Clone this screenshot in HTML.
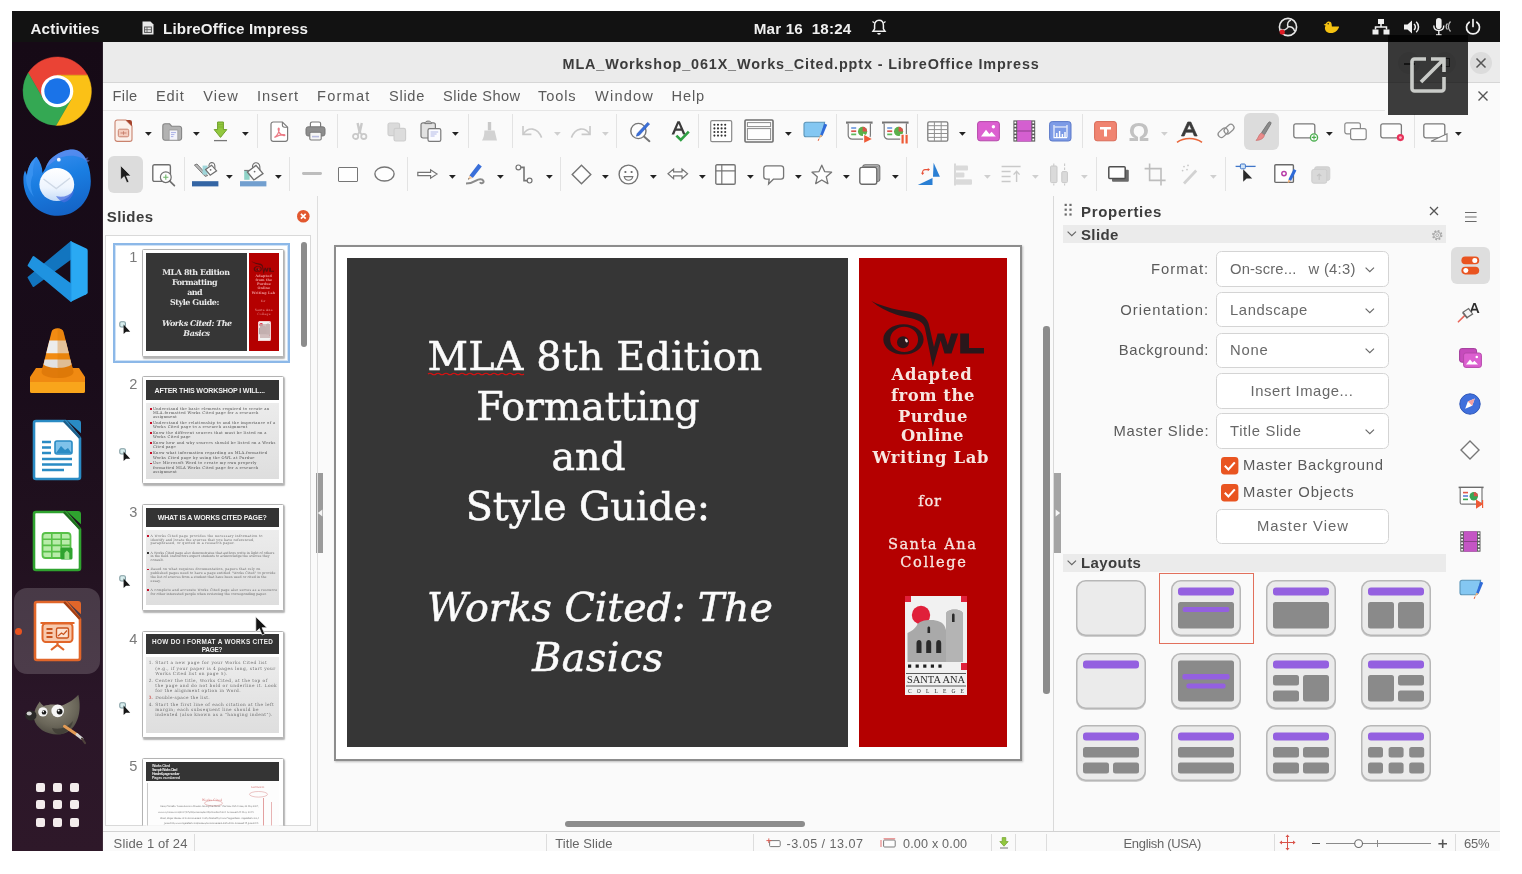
<!DOCTYPE html>
<html lang="en">
<head>
<meta charset="utf-8">
<title>MLA_Workshop_061X_Works_Cited.pptx - LibreOffice Impress</title>
<style>
*{box-sizing:border-box;margin:0;padding:0}
html,body{width:1522px;height:874px;overflow:hidden;background:#fff}
body{position:relative;font-family:"Liberation Sans",sans-serif;font-size:14px;color:#4a4a4a}
#screen{position:absolute;left:12px;top:11px;width:1488px;height:840px;background:#fafafa;overflow:hidden}
#pg{position:absolute;left:-12px;top:-11px;width:1522px;height:874px;will-change:transform}
#pg div,#pg span.t,#pg svg.i{position:absolute}
span.t{white-space:pre}
svg.i{overflow:visible}
</style>
</head>
<body>
<div id="screen"><div id="pg">
<div style="left:12.0px;top:11.0px;width:1488.0px;height:31.0px;background:#121212;"></div>
<span class="t" style="left:30.5px;top:20.5px;font-size:15.2px;line-height:15.2px;color:#f0f0f0;font-weight:700;letter-spacing:0.15px;">Activities</span>
<span class="t" style="left:163.0px;top:20.5px;font-size:15.2px;line-height:15.2px;color:#f0f0f0;font-weight:700;letter-spacing:0.13px;">LibreOffice Impress</span>
<span class="t" style="left:753.8px;top:20.5px;font-size:15.2px;line-height:15.2px;color:#f0f0f0;font-weight:700;letter-spacing:0.17px;">Mar 16  18:24</span>
<svg class="i" style="left:141.0px;top:20.0px;" width="14" height="16" viewBox="0 0 14 16"><path d="M1.5 1.5h8l3 3v10h-11z" fill="#e8e8e8"/><rect x="3.6" y="7" width="6.8" height="5.4" fill="none" stroke="#555" stroke-width="1"/><path d="M3.6 9.7h6.8M6 7v5.4" stroke="#555" stroke-width=".8"/></svg>
<svg class="i" style="left:870.0px;top:18.0px;" width="18" height="19" viewBox="0 0 18 19"><path d="M9 2.2c-2.9 0-4.4 2.2-4.4 5v3.6L3 13.2h12l-1.6-2.4V7.2c0-2.8-1.5-5-4.4-5z" fill="none" stroke="#f0f0f0" stroke-width="1.5"/><path d="M7.2 15h3.6a1.8 1.8 0 0 1-3.6 0z" fill="#f0f0f0"/><path d="M2.5 3.5l2 1.5M15.5 3.5l-2 1.5" stroke="#f0f0f0" stroke-width="1.2"/></svg>
<svg class="i" style="left:1278.0px;top:17.0px;" width="20" height="20" viewBox="0 0 20 20"><circle cx="10" cy="10" r="8.6" fill="#1a1a1a" stroke="#e6e6e6" stroke-width="1.6"/><path d="M10 10c-1-3 0-6 3-7M10 10c3-1 6 1 6.5 4M10 10c-1.5 3-5 4-7.5 2" stroke="#e6e6e6" stroke-width="1.5" fill="none"/><circle cx="4.2" cy="15" r="2.6" fill="#e01b24"/></svg>
<svg class="i" style="left:1323.0px;top:20.0px;" width="18" height="15" viewBox="0 0 18 15"><path d="M3 3.5c1.2-2.6 5-2.6 5.6.4l.3 2.6h6.600000000000001c.4 0 .7.5.4.9-1.3 2.6-3.400000000000001 5.6-8 5.6-3.6 0-6-2-6-5 0-1 .3-1.700000000000001.8-2.200000000000001L.6 4.8z" fill="#f5c211"/><circle cx="5.2" cy="3.8" r=".8" fill="#222"/></svg>
<svg class="i" style="left:1372.0px;top:18.0px;" width="18" height="18" viewBox="0 0 18 18"><rect x="6" y="1" width="6" height="5" fill="#f0f0f0"/><rect x="0.5" y="11.5" width="6" height="5" fill="#f0f0f0"/><rect x="11.5" y="11.5" width="6" height="5" fill="#f0f0f0"/><path d="M9 6v3M3.5 11.5V9h11v2.5" stroke="#f0f0f0" stroke-width="1.5" fill="none"/></svg>
<svg class="i" style="left:1403.0px;top:18.0px;" width="18" height="18" viewBox="0 0 18 18"><path d="M1 6.5h3.5L9 2.5v13L4.500000000000001 11.5H1z" fill="#f0f0f0"/><path d="M11 6a4 4 0 0 1 0 6M13.2 3.8a7 7 0 0 1 0 10.4" stroke="#f0f0f0" stroke-width="1.5" fill="none"/></svg>
<svg class="i" style="left:1432.0px;top:17.0px;" width="21" height="20" viewBox="0 0 21 20"><rect x="4" y="1" width="5.6" height="11" rx="2.8" fill="#f0f0f0"/><path d="M1.8 8.5c0 3 2 5 5 5s5-2 5-5M6.8 13.5v4M4 18h5.6" stroke="#f0f0f0" stroke-width="1.4" fill="none"/><path d="M15.5 6.5a4 4 0 0 0 0 6M18.5 4.5a7 7 0 0 0 0 10" stroke="#bdbdbd" stroke-width="1.3" fill="none"/></svg>
<svg class="i" style="left:1464.0px;top:18.0px;" width="18" height="18" viewBox="0 0 18 18"><path d="M5.2 4.2a6.5 6.5 0 1 0 7.6 0" stroke="#f0f0f0" stroke-width="1.7" fill="none" stroke-linecap="round"/><path d="M9 1.5v7" stroke="#f0f0f0" stroke-width="1.7" stroke-linecap="round"/></svg>
<div style="left:103.0px;top:42.0px;width:1397.0px;height:40.5px;background:#ebebeb;"></div>
<div style="left:103.0px;top:82.0px;width:1397.0px;height:1.0px;background:#d6d6d6;"></div>
<span class="t" style="left:562.6px;top:57.2px;font-size:14.4px;line-height:14.4px;color:#3c3c3c;font-weight:700;letter-spacing:0.86px;">MLA_Workshop_061X_Works_Cited.pptx - LibreOffice Impress</span>
<div style="left:1470.0px;top:51.5px;width:22.0px;height:22.0px;background:#dcdcdc;border-radius:11px;"></div>
<svg class="i" style="left:1475.0px;top:57.0px;" width="12" height="12" viewBox="0 0 12 12"><path d="M1.5 1.5l9 9M10.5 1.5l-9 9" stroke="#555" stroke-width="1.5"/></svg>
<div style="left:1398.0px;top:51.5px;width:22.0px;height:22.0px;background:#dcdcdc;border-radius:11px;"></div>
<div style="left:1403.5px;top:63.0px;width:11.0px;height:1.5px;background:#555;"></div>
<div style="left:1434.0px;top:51.5px;width:22.0px;height:22.0px;background:#dcdcdc;border-radius:11px;"></div>
<div style="left:1440.5px;top:58.0px;width:9.0px;height:9.0px;border:1.4px solid #555;"></div>
<div style="left:103.0px;top:83.0px;width:1397.0px;height:27.0px;background:#fafafa;"></div>
<div style="left:103.0px;top:109.5px;width:1282.0px;height:1.0px;background:#e6e6e6;"></div>
<span class="t" style="left:112.4px;top:89.0px;font-size:14.6px;line-height:14.6px;color:#5a5a5a;letter-spacing:0.42px;">File</span>
<span class="t" style="left:156.0px;top:89.0px;font-size:14.6px;line-height:14.6px;color:#5a5a5a;letter-spacing:0.86px;">Edit</span>
<span class="t" style="left:203.3px;top:89.0px;font-size:14.6px;line-height:14.6px;color:#5a5a5a;letter-spacing:1.03px;">View</span>
<span class="t" style="left:256.9px;top:89.0px;font-size:14.6px;line-height:14.6px;color:#5a5a5a;letter-spacing:0.93px;">Insert</span>
<span class="t" style="left:317.0px;top:89.0px;font-size:14.6px;line-height:14.6px;color:#5a5a5a;letter-spacing:1.24px;">Format</span>
<span class="t" style="left:389.0px;top:89.0px;font-size:14.6px;line-height:14.6px;color:#5a5a5a;letter-spacing:0.71px;">Slide</span>
<span class="t" style="left:443.0px;top:89.0px;font-size:14.6px;line-height:14.6px;color:#5a5a5a;letter-spacing:0.45px;">Slide Show</span>
<span class="t" style="left:538.0px;top:89.0px;font-size:14.6px;line-height:14.6px;color:#5a5a5a;letter-spacing:0.88px;">Tools</span>
<span class="t" style="left:595.0px;top:89.0px;font-size:14.6px;line-height:14.6px;color:#5a5a5a;letter-spacing:1.18px;">Window</span>
<span class="t" style="left:671.5px;top:89.0px;font-size:14.6px;line-height:14.6px;color:#5a5a5a;letter-spacing:0.87px;">Help</span>
<svg class="i" style="left:1477.0px;top:90.0px;" width="12" height="12" viewBox="0 0 12 12"><path d="M1.5 1.5l9 9M10.5 1.5l-9 9" stroke="#555" stroke-width="1.4"/></svg>
<div style="left:257.2px;top:114.0px;width:1.0px;height:34.0px;background:#e3e3e3;"></div>
<div style="left:337.3px;top:114.0px;width:1.0px;height:34.0px;background:#e3e3e3;"></div>
<div style="left:467.5px;top:114.0px;width:1.0px;height:34.0px;background:#e3e3e3;"></div>
<div style="left:511.8px;top:114.0px;width:1.0px;height:34.0px;background:#e3e3e3;"></div>
<div style="left:616.2px;top:114.0px;width:1.0px;height:34.0px;background:#e3e3e3;"></div>
<div style="left:698.2px;top:114.0px;width:1.0px;height:34.0px;background:#e3e3e3;"></div>
<div style="left:836.1px;top:114.0px;width:1.0px;height:34.0px;background:#e3e3e3;"></div>
<div style="left:917.3px;top:114.0px;width:1.0px;height:34.0px;background:#e3e3e3;"></div>
<div style="left:1081.8px;top:114.0px;width:1.0px;height:34.0px;background:#e3e3e3;"></div>
<div style="left:1413.8px;top:114.0px;width:1.0px;height:34.0px;background:#e3e3e3;"></div>
<svg class="i" style="left:114.2px;top:119.3px;" width="19" height="23.4" viewBox="0 0 19 23.4"><path d="M1 3.2A2.2 2.2 0 0 1 3.2 1H12l6 6v13.2a2.2 2.2 0 0 1-2.2 2.2H3.2A2.2 2.2 0 0 1 1 20.2z" fill="#fbf1ec" stroke="#c9826d" stroke-width="1.1"/><path d="M12 1h3.8A2.2 2.2 0 0 1 18 3.2V7z" fill="#a5432c"/><rect x="4.3" y="10.2" width="10.4" height="7.6" rx="1.4" fill="#f3cbbd" stroke="#c9826d" stroke-width="1"/><path d="M6.5 14h6M9.5 12.3v3.4" stroke="#c9826d" stroke-width="1"/></svg>
<svg class="i" style="left:145.2px;top:131.5px;" width="6.8" height="3.8" viewBox="0 0 6.8 3.8"><path d="M0 0h6.8L3.4 3.8z" fill="#222"/></svg>
<svg class="i" style="left:161.8px;top:123.2px;" width="20.4" height="18" viewBox="0 0 20.4 18"><path d="M.8 3A2.2 2.2 0 0 1 3 .8h4.6l2 2.4H17.4A2.2 2.2 0 0 1 19.6 5.4V15a2.2 2.2 0 0 1-2.2 2.2H3A2.2 2.2 0 0 1 .8 15z" fill="#b2b2b2" stroke="#858585" stroke-width="1.1"/><path d="M7.2 7h8.6v10.2H7.2z" fill="#f4f4fb" stroke="#9a9a9a" stroke-width=".8"/><path d="M9 9.6h5M9 11.6h3.4M9 13.6h2.4" stroke="#a9b0e6" stroke-width="1"/></svg>
<svg class="i" style="left:193.3px;top:131.5px;" width="6.8" height="3.8" viewBox="0 0 6.8 3.8"><path d="M0 0h6.8L3.4 3.8z" fill="#222"/></svg>
<svg class="i" style="left:212.8px;top:121.0px;" width="15" height="21" viewBox="0 0 15 21"><path d="M4.6 1h5.8v7.6h3.4L7.5 16.4 1.2 8.6h3.4z" fill="#92c83e" stroke="#6f9f2a" stroke-width="1"/><path d="M4.8 3.6h5.4M4.8 6h5.4" stroke="#7fb533" stroke-width="1"/><path d="M1 19.6h13" stroke="#777" stroke-width="1.3"/></svg>
<svg class="i" style="left:241.6px;top:131.5px;" width="6.8" height="3.8" viewBox="0 0 6.8 3.8"><path d="M0 0h6.8L3.4 3.8z" fill="#222"/></svg>
<svg class="i" style="left:270.2px;top:120.5px;" width="18.6" height="21.4" viewBox="0 0 18.6 21.4"><path d="M1 3.2A2.2 2.2 0 0 1 3.2 1h9.2l5.2 5.2v12a2.2 2.2 0 0 1-2.2 2.2H3.2A2.2 2.2 0 0 1 1 18.200000000000003z" fill="#fff" stroke="#7a7a7a" stroke-width="1.2"/><path d="M12.4 1v3a2.2 2.2 0 0 0 2.2 2.2h3" fill="none" stroke="#7a7a7a" stroke-width="1.1"/><path d="M4.4 16.4c2.6-1.600000000000001 4.4-4.4 4.8-8 .2-1.6-1.2-1.6-1 0 .4 3.2 2.6 5.6 5.8 6.2 1.2.2 1.2-1 0-1-3.2 0-6.6 1-9.6 2.8z" fill="none" stroke="#ec7b86" stroke-width="1.2"/></svg>
<svg class="i" style="left:304.8px;top:121.2px;" width="21" height="20" viewBox="0 0 21 20"><path d="M5.4 6V2.6A1.6 1.6 0 0 1 7 1h7a1.6 1.6 0 0 1 1.6 1.6V6" fill="#fff" stroke="#7a7a7a" stroke-width="1.2"/><rect x="1" y="5.8" width="19" height="9.2" rx="2.2" fill="#8d8d8d" stroke="#777" stroke-width="1"/><rect x="4.8" y="11.2" width="11.4" height="7.8" rx="1.2" fill="#f6f6f6" stroke="#7a7a7a" stroke-width="1.1"/><path d="M7 15.6h7" stroke="#b9bde0" stroke-width="1.6"/></svg>
<svg class="i" style="left:352.3px;top:122.4px;" width="15.4" height="18.4" viewBox="0 0 15.4 18.4"><path d="M5.6 1l2.1 9.6M9.8 1L7.7 10.600000000000001" stroke="#c9c9c9" stroke-width="2.4" fill="none"/><circle cx="3.6" cy="14.4" r="2.6" fill="none" stroke="#c9c9c9" stroke-width="1.8"/><circle cx="11.8" cy="14.4" r="2.6" fill="none" stroke="#c9c9c9" stroke-width="1.8"/><path d="M5.600000000000001 12.8l2.1-3 2.1 3" stroke="#c9c9c9" stroke-width="1.8" fill="none"/></svg>
<svg class="i" style="left:386.5px;top:121.6px;" width="19.6" height="20" viewBox="0 0 19.6 20"><rect x="1" y="1" width="11.6" height="12.6" rx="1.8" fill="#dadada" stroke="#cdcdcd" stroke-width="1.1"/><rect x="7" y="6.4" width="11.6" height="12.6" rx="1.8" fill="#dcdcdc" stroke="#cdcdcd" stroke-width="1.1"/></svg>
<svg class="i" style="left:420.1px;top:120.2px;" width="21.8" height="22.4" viewBox="0 0 21.8 22.4"><path d="M1 4.8A2 2 0 0 1 3 2.8h10.4a2 2 0 0 1 2 2V16a2 2 0 0 1-2 2H3a2 2 0 0 1-2-2z" fill="#e2e2e2" stroke="#7a7a7a" stroke-width="1.2"/><path d="M4.8 3.6c0-3.4 6.8-3.4 6.8 0z" fill="#bdbdbd" stroke="#7a7a7a" stroke-width="1"/><rect x="8" y="8.6" width="12.8" height="12.8" rx="1.6" fill="#fbfbff" stroke="#7a7a7a" stroke-width="1.2"/><path d="M10.6 12h7.6M10.6 14h6M10.6 16h4" stroke="#b4b9e8" stroke-width="1.2"/></svg>
<svg class="i" style="left:451.9px;top:131.5px;" width="6.8" height="3.8" viewBox="0 0 6.8 3.8"><path d="M0 0h6.8L3.4 3.8z" fill="#222"/></svg>
<svg class="i" style="left:480.5px;top:121.0px;" width="17" height="20.4" viewBox="0 0 17 20.4"><path d="M6.8 1h3.4v8.4H6.8z" fill="#c9c9c9"/><path d="M3.4 9.4h10.2l2.4 10H1c1.6-2.400000000000001 2.4-5.6 2.4-10z" fill="#d2d2d2"/></svg>
<svg class="i" style="left:521.0px;top:123.5px;" width="22" height="15" viewBox="0 0 22 15"><path d="M2 2v8.4h8.4" fill="none" stroke="#c9c9c9" stroke-width="1.6"/><path d="M2.4 10C7 2.8 16.4 3 20.6 13.6" fill="none" stroke="#c9c9c9" stroke-width="1.6"/></svg>
<svg class="i" style="left:553.6px;top:131.5px;" width="6.8" height="3.8" viewBox="0 0 6.8 3.8"><path d="M0 0h6.8L3.4 3.8z" fill="#cfcfcf"/></svg>
<svg class="i" style="left:570.0px;top:123.5px;" width="22" height="15" viewBox="0 0 22 15"><path d="M20 2v8.4h-8.4" fill="none" stroke="#c9c9c9" stroke-width="1.6"/><path d="M19.6 10C15 2.8 5.6 3 1.4 13.6" fill="none" stroke="#c9c9c9" stroke-width="1.6"/></svg>
<svg class="i" style="left:602.2px;top:131.5px;" width="6.8" height="3.8" viewBox="0 0 6.8 3.8"><path d="M0 0h6.8L3.4 3.8z" fill="#cfcfcf"/></svg>
<svg class="i" style="left:629.0px;top:120.2px;" width="22" height="22" viewBox="0 0 22 22"><circle cx="9.4" cy="11" r="7.6" fill="#fdfdfd" stroke="#767676" stroke-width="1.4"/><path d="M15 16.6l5.4 4.6" stroke="#767676" stroke-width="2" stroke-linecap="round"/><path d="M8.2 13.6L18.6 2.4l2 1.6L10.4 15.200000000000001l-3 1z" fill="#3a6fd9" stroke="#2b59b8" stroke-width=".6"/></svg>
<svg class="i" style="left:668.5px;top:120.0px;" width="21" height="22" viewBox="0 0 21 22"><path d="M2.6 14.4L8.4 1.2h2.400000000000001L16.6 14.4h-2.6l-1.5-3.6H6.7l-1.5 3.6zM7.6 8.6h4L9.6 3.8z" fill="#3a3a3a"/><path d="M7.4 15.6l4.4 4.4 8-8.4" fill="none" stroke="#2fa043" stroke-width="2.6"/></svg>
<svg class="i" style="left:709.8px;top:119.8px;" width="22.4" height="22.4" viewBox="0 0 22.4 22.4"><rect x=".7" y=".7" width="21" height="21" rx="1.4" fill="#fff" stroke="#8a8a8a" stroke-width="1.2"/><circle cx="4.4" cy="4.8" r="1.05" fill="#333"/><circle cx="4.4" cy="8.4" r="1.05" fill="#333"/><circle cx="4.4" cy="12.0" r="1.05" fill="#333"/><circle cx="4.4" cy="15.6" r="1.05" fill="#333"/><circle cx="8.0" cy="4.8" r="1.05" fill="#333"/><circle cx="8.0" cy="8.4" r="1.05" fill="#333"/><circle cx="8.0" cy="12.0" r="1.05" fill="#333"/><circle cx="8.0" cy="15.6" r="1.05" fill="#333"/><circle cx="11.6" cy="4.8" r="1.05" fill="#333"/><circle cx="11.6" cy="8.4" r="1.05" fill="#333"/><circle cx="11.6" cy="12.0" r="1.05" fill="#333"/><circle cx="11.6" cy="15.6" r="1.05" fill="#333"/><circle cx="15.2" cy="4.8" r="1.05" fill="#333"/><circle cx="15.2" cy="8.4" r="1.05" fill="#333"/><circle cx="15.2" cy="12.0" r="1.05" fill="#333"/><circle cx="15.2" cy="15.6" r="1.05" fill="#333"/></svg>
<svg class="i" style="left:744.0px;top:119.0px;" width="30" height="24" viewBox="0 0 30 24"><rect x="1" y="1" width="28" height="22" rx="1" fill="#fdfdfd" stroke="#6f6f6f" stroke-width="1.6"/><rect x="3.4" y="3.6" width="23.2" height="4" fill="none" stroke="#8a8a8a" stroke-width="1"/><rect x="3.4" y="9.6" width="23.2" height="11" fill="none" stroke="#8a8a8a" stroke-width="1"/></svg>
<svg class="i" style="left:784.9px;top:131.5px;" width="6.8" height="3.8" viewBox="0 0 6.8 3.8"><path d="M0 0h6.8L3.4 3.8z" fill="#222"/></svg>
<svg class="i" style="left:802.5px;top:121.0px;" width="25" height="21" viewBox="0 0 25 21"><path d="M1 3.2A2 2 0 0 1 3 1.2h18.6L19 14.2a2 2 0 0 1-2 1.6H3a2 2 0 0 1-2-2z" fill="#84c7f2" stroke="#5a94b8" stroke-width="1.1"/><path d="M17.2 13.8L21.4 2.6l2.8 1.2-4.6 11z" fill="#2f6bd8"/><path d="M17.2 13.8l-1.2 3.8 3.600000000000001-2.8z" fill="#f0b27a"/><path d="M16 17.6l-.8 2.2" stroke="#e4572e" stroke-width="1"/></svg>
<svg class="i" style="left:845.7px;top:120.5px;" width="26.6" height="23" viewBox="0 0 26.6 23"><path d="M0 1.6h26.6" stroke="#757575" stroke-width="2.2"/><path d="M2.2 2.4v11.800000000000001a4 4 0 0 0 4 4h14.2a4 4 0 0 0 4-4V2.4" fill="#fdfdfd" stroke="#7a7a7a" stroke-width="1.2"/><path d="M5.2 7h5" stroke="#6f9be0" stroke-width="1.7"/><path d="M5.2 10.2h5" stroke="#d9534a" stroke-width="1.7"/><path d="M5.2 13.4h5" stroke="#5cb85c" stroke-width="1.7"/><circle cx="16.6" cy="10.4" r="4.6" fill="#5ab04a"/><path d="M16.6 10.4V5.800000000000001a4.6 4.6 0 0 1 4.6 4.6z" fill="#d9534a"/><path d="M17 12.600000000000001l9.6 5-9.6 5z" fill="#fafafa"/><path d="M18.2 14l7.6 3.9-7.6 3.9z" fill="#ee5a36"/></svg>
<svg class="i" style="left:881.7px;top:120.5px;" width="26.6" height="23" viewBox="0 0 26.6 23"><path d="M0 1.6h26.6" stroke="#757575" stroke-width="2.2"/><path d="M2.2 2.4v11.800000000000001a4 4 0 0 0 4 4h14.2a4 4 0 0 0 4-4V2.4" fill="#fdfdfd" stroke="#7a7a7a" stroke-width="1.2"/><path d="M5.2 7h5" stroke="#6f9be0" stroke-width="1.7"/><path d="M5.2 10.2h5" stroke="#d9534a" stroke-width="1.7"/><path d="M5.2 13.4h5" stroke="#5cb85c" stroke-width="1.7"/><circle cx="16.6" cy="10.4" r="4.6" fill="#5ab04a"/><path d="M16.6 10.4V5.800000000000001a4.6 4.6 0 0 1 4.6 4.6z" fill="#d9534a"/><rect x="18.2" y="13" width="8.4" height="10" fill="#fafafa"/><path d="M20.6 13.8v8.6M24.6 13.8v8.6" stroke="#ee5a36" stroke-width="2.2"/></svg>
<svg class="i" style="left:927.2px;top:120.5px;" width="21.6" height="21" viewBox="0 0 21.6 21"><rect x=".8" y=".8" width="20" height="19.4" rx="1.4" fill="#fdfdfd" stroke="#7d7d7d" stroke-width="1.3"/><path d="M.8 4.7h20M.8 8.6h20M.8 12.5h20M.8 16.4h20M7.4.8v19.4M14.2.8v19.4" stroke="#8f8f8f" stroke-width="1"/></svg>
<svg class="i" style="left:959.3px;top:131.5px;" width="6.8" height="3.8" viewBox="0 0 6.8 3.8"><path d="M0 0h6.8L3.4 3.8z" fill="#222"/></svg>
<svg class="i" style="left:976.8px;top:121.2px;" width="23" height="20.4" viewBox="0 0 23 20.4"><rect x=".6" y=".6" width="21.8" height="19.2" rx="2.4" fill="#dc5fd0" stroke="#b548aa" stroke-width="1"/><path d="M4 15.4l5-6.6 3.4 4.2 2.2-2.2 4.200000000000001 4.6z" fill="#fff"/><circle cx="16.4" cy="5.8" r="1.7" fill="#fff"/></svg>
<svg class="i" style="left:1013.0px;top:120.2px;" width="22.6" height="22" viewBox="0 0 22.6 22"><rect x=".4" y=".4" width="21.8" height="21.2" fill="#5b5b5b"/><rect x="4.2" y=".4" width="14.2" height="21.2" fill="#d45fd0"/><path d="M4.2 11h14.2" stroke="#8c3e8a" stroke-width="1"/><rect x="1.4" y="1.6" width="1.8" height="1.8" fill="#fff"/><rect x="19.4" y="1.6" width="1.8" height="1.8" fill="#fff"/><rect x="1.4" y="5.0" width="1.8" height="1.8" fill="#fff"/><rect x="19.4" y="5.0" width="1.8" height="1.8" fill="#fff"/><rect x="1.4" y="8.4" width="1.8" height="1.8" fill="#fff"/><rect x="19.4" y="8.4" width="1.8" height="1.8" fill="#fff"/><rect x="1.4" y="11.8" width="1.8" height="1.8" fill="#fff"/><rect x="19.4" y="11.8" width="1.8" height="1.8" fill="#fff"/><rect x="1.4" y="15.2" width="1.8" height="1.8" fill="#fff"/><rect x="19.4" y="15.2" width="1.8" height="1.8" fill="#fff"/><rect x="1.4" y="18.6" width="1.8" height="1.8" fill="#fff"/><rect x="19.4" y="18.6" width="1.8" height="1.8" fill="#fff"/></svg>
<svg class="i" style="left:1049.3px;top:121.1px;" width="22.6" height="20.6" viewBox="0 0 22.6 20.6"><rect x=".6" y=".6" width="21.4" height="19.4" rx="2.6" fill="#7d9be6" stroke="#5a78c8" stroke-width="1"/><path d="M5 4v12.6h13M18 4v12.6" stroke="#fff" stroke-width="1.1" fill="none"/><path d="M5.6 6h12" stroke="#fff" stroke-width="1"/><path d="M7.8 16v-4M10.6 16v-6M13.4 16v-3M16 16v-5" stroke="#fff" stroke-width="1.4"/></svg>
<svg class="i" style="left:1094.0px;top:121.2px;" width="23" height="20.4" viewBox="0 0 23 20.4"><rect x=".6" y=".6" width="21.8" height="19.2" rx="2.4" fill="#f08471" stroke="#d96a57" stroke-width="1"/><path d="M6 6h11v2.6H13v7h-3v-7H6z" fill="#fff"/></svg>
<span class="t" style="left:1128.4px;top:118.6px;font-size:26px;line-height:26px;color:#c2c2c2;font-weight:700;letter-spacing:0.75px;">Ω</span>
<svg class="i" style="left:1160.9px;top:131.5px;" width="6.8" height="3.8" viewBox="0 0 6.8 3.8"><path d="M0 0h6.8L3.4 3.8z" fill="#cfcfcf"/></svg>
<svg class="i" style="left:1176.0px;top:120.5px;" width="27" height="23" viewBox="0 0 27 23"><path d="M5.4 15L11.8 1h3L21.2 15h-2.8l-1.6-3.8h-7l-1.6 3.8zM10.8 8.8h5L13.3 3.4z" fill="#3a3a3a" stroke="#3a3a3a" stroke-width=".7"/><path d="M1 21.4c7-5.2 18-5.2 25 0" fill="none" stroke="#e8663a" stroke-width="1.6"/></svg>
<svg class="i" style="left:1216.3px;top:121.4px;" width="20" height="20" viewBox="0 0 20 20"><rect x="1.6" y="8.6" width="11" height="6.4" rx="3.2" transform="rotate(-42 7 11.8)" fill="none" stroke="#8f8f8f" stroke-width="1.25"/><rect x="7.6" y="5" width="11" height="6.4" rx="3.2" transform="rotate(-42 13 8.2)" fill="none" stroke="#8f8f8f" stroke-width="1.25"/></svg>
<div style="left:1244.0px;top:113.0px;width:35.4px;height:37.4px;background:#dcdcdc;border-radius:6px;"></div>
<svg class="i" style="left:1252.5px;top:121.1px;" width="19" height="21" viewBox="0 0 19 21"><path d="M8.6 11.6L15.4 1.6c1.4-1.6 3.2-.4 2.4 1.4L11.6 13.600000000000001z" fill="#8a8a8a" stroke="#6c6c6c" stroke-width=".8"/><path d="M8 12l3.4 2.2c-.6 3-3.4 5-8.4 5.200000000000001 2-1.600000000000001 2.4-5.2 5-7.4z" fill="#e98a8a" stroke="#c96a6a" stroke-width=".7"/></svg>
<svg class="i" style="left:1293.0px;top:122.5px;" width="26" height="19" viewBox="0 0 26 19"><rect x=".8" y=".8" width="21" height="14" rx="2" fill="#fdfdfd" stroke="#7a7a7a" stroke-width="1.3"/><circle cx="21" cy="14.4" r="3.6" fill="#fdfdfd" stroke="#4caf50" stroke-width="1.3"/><path d="M21 12.2v4.4M18.8 14.4h4.4" stroke="#4caf50" stroke-width="1.2"/></svg>
<svg class="i" style="left:1326.4px;top:131.5px;" width="6.8" height="3.8" viewBox="0 0 6.8 3.8"><path d="M0 0h6.8L3.4 3.8z" fill="#222"/></svg>
<svg class="i" style="left:1343.5px;top:121.8px;" width="23" height="18.4" viewBox="0 0 23 18.4"><rect x=".8" y=".8" width="15.6" height="11" rx="2" fill="#fdfdfd" stroke="#8a8a8a" stroke-width="1.2"/><rect x="6.6" y="6.6" width="15.6" height="11" rx="2" fill="#fdfdfd" stroke="#8a8a8a" stroke-width="1.2"/></svg>
<svg class="i" style="left:1379.8px;top:122.5px;" width="24.4" height="19" viewBox="0 0 24.4 19"><rect x=".8" y=".8" width="20.6" height="14" rx="2" fill="#fdfdfd" stroke="#7a7a7a" stroke-width="1.3"/><circle cx="20.4" cy="14.6" r="3.6" fill="#e8325a"/><circle cx="20.4" cy="14.6" r="1.4" fill="#f7b3c2"/></svg>
<svg class="i" style="left:1422.5px;top:122.5px;" width="25" height="19" viewBox="0 0 25 19"><rect x=".8" y=".8" width="21" height="14" rx="2" fill="#fdfdfd" stroke="#7a7a7a" stroke-width="1.3"/><path d="M8 18.200000000000003L24 10.8v7.4z" fill="#fdfdfd" stroke="#7a7a7a" stroke-width="1.1"/></svg>
<svg class="i" style="left:1455.3px;top:131.5px;" width="6.8" height="3.8" viewBox="0 0 6.8 3.8"><path d="M0 0h6.8L3.4 3.8z" fill="#222"/></svg>
<div style="left:184.1px;top:157.0px;width:1.0px;height:34.0px;background:#e3e3e3;"></div>
<div style="left:289.3px;top:157.0px;width:1.0px;height:34.0px;background:#e3e3e3;"></div>
<div style="left:407.0px;top:157.0px;width:1.0px;height:34.0px;background:#e3e3e3;"></div>
<div style="left:559.5px;top:157.0px;width:1.0px;height:34.0px;background:#e3e3e3;"></div>
<div style="left:906.2px;top:157.0px;width:1.0px;height:34.0px;background:#e3e3e3;"></div>
<div style="left:1095.5px;top:157.0px;width:1.0px;height:34.0px;background:#e3e3e3;"></div>
<div style="left:1225.3px;top:157.0px;width:1.0px;height:34.0px;background:#e3e3e3;"></div>
<div style="left:107.9px;top:155.7px;width:35.5px;height:37.3px;background:#dcdcdc;border-radius:6px;"></div>
<svg class="i" style="left:120.2px;top:165.3px;" width="11.6" height="18.6" viewBox="0 0 11.6 18.6"><path d="M.6.6v14.2l3.6-3.2 2.6 6.2 2.2-.9-2.6-6h4.6z" fill="#1e1e1e" stroke="#f4f4f4" stroke-width=".6"/></svg>
<svg class="i" style="left:151.7px;top:163.9px;" width="23.4" height="22.6" viewBox="0 0 23.4 22.6"><rect x=".8" y=".8" width="17.6" height="16.6" rx="1.6" fill="#fdfdfd" stroke="#6f6f6f" stroke-width="1.4"/><circle cx="13.8" cy="13.2" r="5.4" fill="#fdfdfd" stroke="#6f6f6f" stroke-width="1.2"/><path d="M13.8 10.6v5.2M11.2 13.200000000000001h5.2" stroke="#6fb56a" stroke-width="1.1"/><path d="M17.8 17.2l4.6 4.4" stroke="#6f6f6f" stroke-width="1.7" stroke-linecap="round"/></svg>
<svg class="i" style="left:192.0px;top:161.0px;" width="26.4" height="25.4" viewBox="0 0 26.4 25.4"><path d="M2.4 4l10.8 11.4 2.4-.8L5 3z" fill="#b9b9b9" stroke="#6f6f6f" stroke-width=".9"/><path d="M10.6 4.6h5v9h-5z" fill="#9fd6da"/><path d="M13.6 8.6l6-4.400000000000001 5 5.6-6.4 4.4z" fill="#fdfdfd" stroke="#6f6f6f" stroke-width="1.2"/><path d="M17 5.4c-.8-4.400000000000001 5.4-5.4 5.8-.8l.2 3.200000000000001" fill="none" stroke="#6f6f6f" stroke-width="1.1"/><circle cx="18.6" cy="8.8" r=".9" fill="#6f6f6f"/><rect x="0" y="20.2" width="26.4" height="5.2" fill="#3465a4"/></svg>
<svg class="i" style="left:226.2px;top:174.6px;" width="6.8" height="3.8" viewBox="0 0 6.8 3.8"><path d="M0 0h6.8L3.4 3.8z" fill="#222"/></svg>
<svg class="i" style="left:239.8px;top:161.0px;" width="26.4" height="25.4" viewBox="0 0 26.4 25.4"><path d="M4.2 9.4h5.4v9.400000000000001H4.2z" fill="#8fd3c7"/><path d="M4.2 9.4h5.4" stroke="#6f6f6f" stroke-width="1"/><path d="M7.4 11l8.6-6.6L23 12.6 13.8 19z" fill="#fdfdfd" stroke="#6f6f6f" stroke-width="1.3"/><path d="M12.6 6.6C11.6 1 19.2-.2 19.8 5.4l.2 4" fill="none" stroke="#6f6f6f" stroke-width="1.1"/><circle cx="14.6" cy="10.600000000000001" r=".9" fill="#6f6f6f"/><rect x="0" y="20.2" width="26.4" height="5.2" fill="#729fcf"/></svg>
<svg class="i" style="left:274.6px;top:174.6px;" width="6.8" height="3.8" viewBox="0 0 6.8 3.8"><path d="M0 0h6.8L3.4 3.8z" fill="#222"/></svg>
<div style="left:302.4px;top:172.0px;width:19.6px;height:2.8px;background:#bdbdbd;border-radius:1.4px;"></div>
<div style="left:337.8px;top:166.7px;width:20.5px;height:15.3px;background:#fefefe;border:1.4px solid #757575;border-radius:1px;"></div>
<svg class="i" style="left:373.7px;top:166.4px;" width="21" height="16" viewBox="0 0 21 16"><ellipse cx="10.5" cy="8" rx="9.6" ry="7" fill="#fefefe" stroke="#757575" stroke-width="1.4"/></svg>
<svg class="i" style="left:416.7px;top:168.6px;" width="21" height="10" viewBox="0 0 21 10"><path d="M.8 3.4h12.8V.8L20 5l-6.4 4.2V6.6H.8z" fill="#fefefe" stroke="#757575" stroke-width="1.2"/></svg>
<svg class="i" style="left:448.8px;top:174.6px;" width="6.8" height="3.8" viewBox="0 0 6.8 3.8"><path d="M0 0h6.8L3.4 3.8z" fill="#222"/></svg>
<svg class="i" style="left:465.3px;top:163.2px;" width="21" height="22" viewBox="0 0 21 22"><path d="M4.4 12.4L13.4.8l3.4 2.6-9 11.6z" fill="#3a6fd9"/><path d="M4.4 12.4l-1.4 4.4 4.800000000000001-1.8z" fill="#f3c9a0"/><path d="M3 16.8l.6-1.8 1 .8z" fill="#555"/><path d="M1 20.6c4.4 0 7-1.2 10-3 2.6-1.6 6.4-2 7.4.2 1 2.2-2.6 3.4-3.4 1.400000000000001" fill="none" stroke="#8a8a8a" stroke-width="2"/></svg>
<svg class="i" style="left:497.1px;top:174.6px;" width="6.8" height="3.8" viewBox="0 0 6.8 3.8"><path d="M0 0h6.8L3.4 3.8z" fill="#222"/></svg>
<svg class="i" style="left:515.4px;top:164.2px;" width="18" height="20" viewBox="0 0 18 20"><circle cx="3.4" cy="3.4" r="2.4" fill="#fefefe" stroke="#757575" stroke-width="1.2"/><circle cx="14.6" cy="16.6" r="2.4" fill="#fefefe" stroke="#757575" stroke-width="1.2"/><path d="M5.8 3.4h3.2v13.2h3.2" fill="none" stroke="#757575" stroke-width="1.6"/></svg>
<svg class="i" style="left:545.5px;top:174.6px;" width="6.8" height="3.8" viewBox="0 0 6.8 3.8"><path d="M0 0h6.8L3.4 3.8z" fill="#222"/></svg>
<svg class="i" style="left:570.5px;top:163.7px;" width="21" height="21" viewBox="0 0 21 21"><path d="M10.5 1.2L19.8 10.5 10.5 19.8 1.2 10.5z" fill="#fefefe" stroke="#757575" stroke-width="1.4"/></svg>
<svg class="i" style="left:602.2px;top:174.6px;" width="6.8" height="3.8" viewBox="0 0 6.8 3.8"><path d="M0 0h6.8L3.4 3.8z" fill="#222"/></svg>
<svg class="i" style="left:618.3px;top:163.7px;" width="21" height="21" viewBox="0 0 21 21"><circle cx="10.5" cy="10.5" r="9.4" fill="#fefefe" stroke="#757575" stroke-width="1.4"/><circle cx="7.4" cy="8" r="1.1" fill="#666"/><circle cx="13.6" cy="8" r="1.1" fill="#666"/><path d="M6.2 12.6h8.6c-.6 2.6-2.4 3.6-4.3 3.6s-3.7-1-4.3-3.6z" fill="#fefefe" stroke="#757575" stroke-width="1.1"/></svg>
<svg class="i" style="left:650.1px;top:174.6px;" width="6.8" height="3.8" viewBox="0 0 6.8 3.8"><path d="M0 0h6.8L3.4 3.8z" fill="#222"/></svg>
<svg class="i" style="left:666.5px;top:168.2px;" width="21.6" height="11.6" viewBox="0 0 21.6 11.6"><path d="M1 5.8L6.6 1v2.8h8.4V1l5.6 4.8-5.6 4.8V7.8H6.6v2.8z" fill="#fefefe" stroke="#757575" stroke-width="1.2"/></svg>
<svg class="i" style="left:698.6px;top:174.6px;" width="6.8" height="3.8" viewBox="0 0 6.8 3.8"><path d="M0 0h6.8L3.4 3.8z" fill="#222"/></svg>
<svg class="i" style="left:714.5px;top:163.7px;" width="21" height="21" viewBox="0 0 21 21"><rect x=".8" y=".8" width="19.4" height="19.4" rx="1.2" fill="#fefefe" stroke="#757575" stroke-width="1.4"/><path d="M.8 6.8h19.4M6.8.8v19.4" stroke="#757575" stroke-width="1.2"/></svg>
<svg class="i" style="left:746.6px;top:174.6px;" width="6.8" height="3.8" viewBox="0 0 6.8 3.8"><path d="M0 0h6.8L3.4 3.8z" fill="#222"/></svg>
<svg class="i" style="left:762.9px;top:164.8px;" width="21.4" height="20" viewBox="0 0 21.4 20"><path d="M3.4.8h14.6a2.600000000000001 2.6 0 0 1 2.6 2.6v8.2a2.6 2.6 0 0 1-2.6 2.6H10.4L5.6 19l.6-4.800000000000001H3.4A2.6 2.6 0 0 1 .8 11.6V3.4A2.6 2.6 0 0 1 3.4.8z" fill="#fefefe" stroke="#757575" stroke-width="1.3"/></svg>
<svg class="i" style="left:795.1px;top:174.6px;" width="6.8" height="3.8" viewBox="0 0 6.8 3.8"><path d="M0 0h6.8L3.4 3.8z" fill="#222"/></svg>
<svg class="i" style="left:811.0px;top:163.5px;" width="21.6" height="20.6" viewBox="0 0 21.6 20.6"><path d="M10.8 1.2l2.8 6.4 7 .6-5.300000000000001 4.6 1.6 6.800000000000001-6.100000000000001-3.600000000000001-6.1 3.6 1.6-6.8L1 8.2l7-.6z" fill="#fefefe" stroke="#757575" stroke-width="1.3" stroke-linejoin="round"/></svg>
<svg class="i" style="left:843.2px;top:174.6px;" width="6.8" height="3.8" viewBox="0 0 6.8 3.8"><path d="M0 0h6.8L3.4 3.8z" fill="#222"/></svg>
<svg class="i" style="left:859.2px;top:163.7px;" width="21.6" height="21" viewBox="0 0 21.6 21"><rect x="3.8" y=".8" width="17" height="16.6" rx="2.4" fill="#c9c9c9" stroke="#6f6f6f" stroke-width="1.1"/><path d="M5 2.4h14.6M19.2 3v13" stroke="#8a8a8a" stroke-width=".9"/><rect x=".8" y="3.4" width="17" height="16.8" rx="2.2" fill="#fefefe" stroke="#6a6a6a" stroke-width="1.4"/></svg>
<svg class="i" style="left:891.6px;top:174.6px;" width="6.8" height="3.8" viewBox="0 0 6.8 3.8"><path d="M0 0h6.8L3.4 3.8z" fill="#222"/></svg>
<svg class="i" style="left:916.5px;top:161.7px;" width="24" height="23" viewBox="0 0 24 23"><path d="M16.6.8l6.3 13.9H16z" fill="#2a7fd4"/><path d="M.8 22.9h14.7V16z" fill="#2a7fd4"/><path d="M5.6 11.6V10a2.4 2.4 0 0 1 2.4-2.4h3.4" fill="none" stroke="#e8523a" stroke-width="1.1"/><path d="M3.9 10.8l1.7 2.2 1.7-2.200000000000001zM10.8 5.9l2.2 1.7-2.2 1.7z" fill="#e8523a"/></svg>
<svg class="i" style="left:953.7px;top:162.5px;" width="19" height="23" viewBox="0 0 19 23"><path d="M1 .6v22" stroke="#c9c9c9" stroke-width="1.4"/><rect x="1.6" y="2.4" width="12.4" height="5.2" rx="1" fill="#dadada"/><rect x="1.6" y="9.4" width="8.8" height="5" rx="1" fill="#dadada"/><rect x="1.6" y="16.2" width="16.4" height="5.6" rx="1" fill="#dadada"/></svg>
<svg class="i" style="left:984.3px;top:174.6px;" width="6.8" height="3.8" viewBox="0 0 6.8 3.8"><path d="M0 0h6.8L3.4 3.8z" fill="#cfcfcf"/></svg>
<svg class="i" style="left:1001.0px;top:165.0px;" width="20.4" height="18" viewBox="0 0 20.4 18"><path d="M.6 1.4h19M.6 6.4h9M.6 11.4h9M.6 16.4h9" stroke="#c9c9c9" stroke-width="1.5"/><path d="M15.6 17V6.4M12.6 9.6l3-3.4 3 3.4" fill="none" stroke="#c9c9c9" stroke-width="1.4"/></svg>
<svg class="i" style="left:1032.1px;top:174.6px;" width="6.8" height="3.8" viewBox="0 0 6.8 3.8"><path d="M0 0h6.8L3.4 3.8z" fill="#cfcfcf"/></svg>
<svg class="i" style="left:1048.6px;top:162.5px;" width="20.4" height="23" viewBox="0 0 20.4 23"><path d="M4.8.6v22M15.6.6v22" stroke="#c9c9c9" stroke-width="1.1" stroke-dasharray="2.4 1.6"/><rect x="1.6" y="3" width="6.4" height="16.6" rx="1" fill="#dadada" stroke="#c9c9c9" stroke-width="1"/><rect x="12.8" y="8.6" width="5.6" height="11" rx="1" fill="#dadada" stroke="#c9c9c9" stroke-width="1"/></svg>
<svg class="i" style="left:1080.6px;top:174.6px;" width="6.8" height="3.8" viewBox="0 0 6.8 3.8"><path d="M0 0h6.8L3.4 3.8z" fill="#cfcfcf"/></svg>
<svg class="i" style="left:1107.6px;top:166.2px;" width="21.4" height="16.4" viewBox="0 0 21.4 16.4"><rect x="4" y="3.8" width="16.8" height="12" rx="1" fill="#6a6a6a"/><rect x=".8" y=".8" width="16.4" height="11.6" rx="1" fill="#fefefe" stroke="#4f4f4f" stroke-width="1.5"/></svg>
<svg class="i" style="left:1143.7px;top:163.1px;" width="22" height="23" viewBox="0 0 22 23"><path d="M5.6.6v16.8h16" fill="none" stroke="#bdbdbd" stroke-width="1.6"/><path d="M.6 5.6h16.4v16.8" fill="none" stroke="#bdbdbd" stroke-width="1.6"/></svg>
<svg class="i" style="left:1180.5px;top:164.4px;" width="18" height="20" viewBox="0 0 18 20"><path d="M2 18.4L14.2 5.4l2 2L4 20.4z" fill="#d2d2d2"/><path d="M3 2.6l.01 0M7 1.4l.01 0M1.6 6.6l.01 0M6 5.6l.01 0" stroke="#c9c9c9" stroke-width="1.8" stroke-linecap="round"/></svg>
<svg class="i" style="left:1210.2px;top:174.6px;" width="6.8" height="3.8" viewBox="0 0 6.8 3.8"><path d="M0 0h6.8L3.4 3.8z" fill="#cfcfcf"/></svg>
<svg class="i" style="left:1234.9px;top:163.2px;" width="21" height="20" viewBox="0 0 21 20"><path d="M.6 3.4h20" stroke="#3f76c9" stroke-width="1.3"/><rect x="5.4" y="1" width="5" height="4.8" rx="1" fill="#cfe3f7" stroke="#3f76c9" stroke-width="1"/><path d="M8.2 6.2v12.6l3.400000000000001-3.2h5.6z" fill="#2a2a2a"/></svg>
<svg class="i" style="left:1273.9px;top:164.2px;" width="23" height="20" viewBox="0 0 23 20"><rect x=".8" y=".8" width="18.6" height="17.6" rx="1" fill="#fefefe" stroke="#6a6a6a" stroke-width="1.4"/><circle cx="10" cy="9.6" r="2.2" fill="#fff" stroke="#b83ea8" stroke-width="1.5"/><path d="M14.4 15.6L19.6 5l2.8 1.4-5.4 10.600000000000001z" fill="#2f6bd8"/><path d="M14.4 15.6l-.8 3.6 3.4-2.2z" fill="#f0b27a"/></svg>
<svg class="i" style="left:1310.9px;top:165.5px;" width="19.6" height="18" viewBox="0 0 19.6 18"><rect x="3.6" y=".8" width="15.2" height="13.6" rx="2" fill="#d4d4d4" stroke="#cfcfcf" stroke-width="1"/><rect x=".8" y="3.4" width="15" height="13.8" rx="2" fill="#d9d9d9" stroke="#cdcdcd" stroke-width="1"/><path d="M8.2 14V8M6 10.2L8.2 8l2.2 2.2" fill="none" stroke="#c4c4c4" stroke-width="1.1"/></svg>
<div style="left:12.0px;top:42.0px;width:91.0px;height:809.0px;background:linear-gradient(180deg,#160a16 0%,#190c1a 40%,#21111f 62%,#2a1628 82%,#2e1829 100%);"></div>
<div style="left:102.0px;top:42.0px;width:1.0px;height:809.0px;background:rgba(255,255,255,0.08);"></div>
<svg class="i" style="left:22.8px;top:57.3px;" width="68.4" height="68.4" viewBox="0 0 68.4 68.4"><path d="M34.20,18.13L64.39,18.13A34.2,34.2 0 0 0 5.19,16.09L20.28,42.24L34.2,34.2z" fill="#ea4335" stroke="#ea4335" stroke-width=".5"/><path d="M48.12,42.24L33.03,68.38A34.2,34.2 0 0 0 64.39,18.13L34.20,18.13L34.2,34.2z" fill="#fbc116" stroke="#fbc116" stroke-width=".5"/><path d="M20.28,42.24L5.19,16.09A34.2,34.2 0 0 0 33.03,68.38L48.12,42.24L34.2,34.2z" fill="#34a853" stroke="#34a853" stroke-width=".5"/><circle cx="34.2" cy="34.2" r="16.07" fill="#fff"/><circle cx="34.2" cy="34.2" r="12.83" fill="#1a73e8"/></svg>
<svg class="i" style="left:22.0px;top:148.0px;" width="70" height="70" viewBox="0 0 70 70"><defs><linearGradient id="tbg" x1=".3" y1="0" x2=".6" y2="1"><stop offset="0" stop-color="#3b8ff0"/><stop offset=".45" stop-color="#1a7ee2"/><stop offset="1" stop-color="#1463c6"/></linearGradient>
<linearGradient id="tbe" x1="0" y1="0" x2="0" y2="1"><stop offset="0" stop-color="#ffffff"/><stop offset=".6" stop-color="#eef5fe"/><stop offset="1" stop-color="#c4dbf7"/></linearGradient></defs>
<path d="M51 1.4C61 1.5 68.8 15 68.8 33.3 68.8 53 54 67.8 36.3 67.8 16 67.8 1.4 52 1.4 31.4c0-4 .6-6.400000000000001 1.6-9L5 27C6 18 10 12 14.6 8.700000000000001 18.5 14 20.400000000000002 19 20.5 25l3-5C26 14 28 11 31.4 8.7 37 4 44 1.4 51 1.4z" fill="url(#tbg)"/>
<path d="M51 1.4c5 0 9.4 3.4 12.6 8.6l2.800000000000001-.8-1.400000000000001 2.600000000000001 3 .6-2.4 1.800000000000001C60 8 50 6 40 9c-6 2-11 6-16.5 11C26 14 28 11 31.4 8.700000000000001 37 4 44 1.4 51 1.4z" fill="#6f8cf0" opacity=".55"/>
<path d="M14.600000000000001 8.7C12 14 10.5 20 11 27c-3 6-3 14 1 22-5-6-8-12-8-20L5 27c1-9 5-15 9.600000000000001-18.3z" fill="#3f97f4" opacity=".7"/>
<ellipse cx="34.8" cy="36.5" rx="17.4" ry="16.6" fill="url(#tbe)"/>
<path d="M21.5 31l12.8 9.6L48 30" fill="none" stroke="#cfd9e6" stroke-width="1.3"/>
<path d="M34 48c6 2 13 0 18-5.600000000000001-1 6-5 10.600000000000001-10 12-3-1-6-3-8-6.4z" fill="#4a6fe0" opacity=".75"/>
<circle cx="36.8" cy="11.7" r="1.9" fill="#f2f8ff"/></svg>
<svg class="i" style="left:26.0px;top:240.0px;" width="63" height="63" viewBox="0 0 63 63"><path d="M44.9 2.2L2.6 37.5 7.5 46 44.9 18.5z" fill="#1275bf" stroke="#1275bf" stroke-width="2" stroke-linejoin="round"/>
<path d="M44.9 60.7L2.6 25.5 7.5 17 44.9 44.5z" fill="#1f93e0" stroke="#1f93e0" stroke-width="2" stroke-linejoin="round"/>
<path d="M44.9 1.2L60.4 8.6a2.4 2.4 0 0 1 1.3 2.1V52.2a2.400000000000001 2.4 0 0 1-1.3 2.1L44.9 61.7z" fill="#2aa9f3"/>
<path d="M44.9 1.2v60.5" stroke="#1e98e6" stroke-width="1"/></svg>
<svg class="i" style="left:27.0px;top:326.0px;" width="61" height="70" viewBox="0 0 61 70"><path d="M3 51l6-9h43l6 9v14a2.000000000000001 2 0 0 1-2 2H5a2 2 0 0 1-2-2z" fill="#f08a12"/>
<path d="M3 56h55v9a2 2 0 0 1-2 2H5a2 2 0 0 1-2-2z" fill="#f9a51b"/>
<path d="M24.500000000000004 6c1-5 11-5 12 0l10 40c-1 8-31 8-32 0z" fill="#f28b12"/>
<path d="M22.4 14.500000000000002h16.200000000000003l3.200000000000001 12.8H19.2z" fill="#ececec"/>
<path d="M16.4 38.5l-1.900000000000001 7.5c1 8 31 8 32 0l-1.9-7.5z" fill="#e07a0a"/>
<path d="M17.700000000000003 33.5h25.600000000000005l1.200000000000001 5C40 43 21 43 16.5 38.5z" fill="#e2e2e2"/>
<path d="M30.5 2.2c3.000000000000001 0 5.500000000000001 1.800000000000001 6 3.8l10 40c-.5 4-7 6-16 6z" fill="#d97706" opacity=".35"/></svg>
<svg class="i" style="left:33.0px;top:420.0px;" width="48" height="60" viewBox="0 0 48 60"><path d="M3 1h29.8L47 18.0V57a2 2 0 0 1-2 2H3a2 2 0 0 1-2-2V3a2.000000000000001 2 0 0 1 2-2z" fill="#fff" stroke="#2a8bc4" stroke-width="2.6" stroke-linejoin="round"/><path d="M33.6 0h11.4a3 3 0 0 1 3 3V13.2z" fill="#2a8bc4"/><path d="M30.8 1L47 18.0" stroke="#1c5f8a" stroke-width="2.4"/><path d="M9 22h9M9 27.5h9M9 33h9" stroke="#2a8bc4" stroke-width="2.4"/><rect x="22" y="21" width="17" height="13" rx="2" fill="#7fc2ea" stroke="#2a8bc4" stroke-width="1.6"/><path d="M23 33l5-7 4 4 3-2 3.500000000000001 5z" fill="#2a8bc4"/><path d="M9 39h30M9 44.5h30M9 50h22" stroke="#2a8bc4" stroke-width="2.4"/></svg>
<svg class="i" style="left:33.0px;top:510.6px;" width="48" height="60" viewBox="0 0 48 60"><path d="M3 1h29.8L47 18.0V57a2 2 0 0 1-2 2H3a2 2 0 0 1-2-2V3a2.000000000000001 2 0 0 1 2-2z" fill="#fff" stroke="#2fa32f" stroke-width="2.6" stroke-linejoin="round"/><path d="M33.6 0h11.4a3 3 0 0 1 3 3V13.2z" fill="#2fa32f"/><path d="M30.8 1L47 18.0" stroke="#1e6e1e" stroke-width="2.4"/><rect x="9.5" y="22" width="28" height="25" rx="3" fill="#b9ecaa" stroke="#58c048" stroke-width="1.8"/><path d="M9.500000000000002 28.200000000000003h28M9.5 34.4h28M9.5 40.6h28M18.8 22v25M28.2 22v25" stroke="#58c048" stroke-width="1.6"/><rect x="27.5" y="36.5" width="12" height="12" rx="1.6" fill="#2fa32f"/><path d="M31.500000000000004 48V42l2.4-2.4 2.4 2.400000000000001v6" fill="#9be08a"/></svg>
<div style="left:14.0px;top:588.0px;width:86.0px;height:86.0px;background:rgba(255,255,255,0.17);border-radius:13px;"></div>
<div style="left:14.5px;top:627.5px;width:7.0px;height:7.0px;background:#e95420;border-radius:4px;"></div>
<svg class="i" style="left:33.8px;top:600.6px;" width="47" height="60" viewBox="0 0 47 60"><path d="M3 1h29.1L46 18.0V57a2 2 0 0 1-2 2H3a2 2 0 0 1-2-2V3a2.000000000000001 2 0 0 1 2-2z" fill="#fff" stroke="#e1662a" stroke-width="2.6" stroke-linejoin="round"/><path d="M32.9 0h11.1a3 3 0 0 1 3 3V13.2z" fill="#e1662a"/><path d="M30.1 1L46 18.0" stroke="#a33e12" stroke-width="2.4"/><rect x="8.5" y="22.5" width="30" height="18.5" rx="3.2" fill="#f7c9ad" stroke="#e1662a" stroke-width="2"/><path d="M6.5 22h34" stroke="#e1662a" stroke-width="2.2"/><path d="M12.5 28h6M12.5 32h6M12.5 36h6" stroke="#c9541e" stroke-width="2"/><rect x="22.500000000000004" y="27" width="12" height="10" rx="1.400000000000001" fill="#fbe3d4" stroke="#c9541e" stroke-width="1.4"/><path d="M24 35l3.500000000000001-3 2 1.500000000000001 3.5-4" fill="none" stroke="#c9541e" stroke-width="1.2"/><path d="M23.5 41v3M17 49l6.500000000000001-5 6.5 5" fill="none" stroke="#e1662a" stroke-width="2.2"/></svg>
<svg class="i" style="left:24.0px;top:692.0px;" width="66" height="56" viewBox="0 0 66 56"><defs><radialGradient id="gm" cx=".45" cy=".3" r=".8"><stop offset="0" stop-color="#8f8b7c"/><stop offset=".6" stop-color="#6a6659"/><stop offset="1" stop-color="#45423a"/></radialGradient></defs>
<path d="M10 24c0-5 2-9 5.800000000000001-14.4 1 2 2.200000000000001 3.4 4 4.400000000000001 5-2 12-2 18-.4C45 11 51 7 54.300000000000004 2.800000000000001c2 8 2 18-1 25C50 37 43 42.5 33.3 42.5 22 42.5 12 36 10 27z" fill="url(#gm)"/>
<path d="M28 36c7 2 15 0 21-7-1 6-6 12-13 13.500000000000002-4-.5-7-3-8-6.500000000000001z" fill="#3f3c35" opacity=".8"/>
<ellipse cx="6.9" cy="23.4" rx="5.6" ry="5.2" fill="#2a2927"/><ellipse cx="5.2" cy="21.4" rx="2.6" ry="2" fill="#cfcfcf"/>
<circle cx="18.9" cy="19.9" r="4.7" fill="#f4f4f4"/><circle cx="33.7" cy="18.9" r="6.3" fill="#f6f6f6"/>
<circle cx="20" cy="20.4" r="2.2" fill="#1a1a1a"/><circle cx="35.6" cy="19.6" r="2.9" fill="#1a1a1a"/><circle cx="19.3" cy="19.6" r=".8" fill="#fff"/><circle cx="34.6" cy="18.4" r="1" fill="#fff"/>
<path d="M40.5 34.3l13 8.6" stroke="#e39b55" stroke-width="3" stroke-linecap="round"/><path d="M53 42.6l5 4" stroke="#d4d4d4" stroke-width="2.8" stroke-linecap="round"/><path d="M58 46.6l3 4.4" stroke="#4e423c" stroke-width="2.2" stroke-linecap="round"/></svg>
<div style="left:35.9px;top:783.0px;width:9.0px;height:9.0px;background:#f3ecec;border-radius:2px;"></div>
<div style="left:35.9px;top:800.2px;width:9.0px;height:9.0px;background:#f3ecec;border-radius:2px;"></div>
<div style="left:35.9px;top:817.5px;width:9.0px;height:9.0px;background:#f3ecec;border-radius:2px;"></div>
<div style="left:53.1px;top:783.0px;width:9.0px;height:9.0px;background:#f3ecec;border-radius:2px;"></div>
<div style="left:53.1px;top:800.2px;width:9.0px;height:9.0px;background:#f3ecec;border-radius:2px;"></div>
<div style="left:53.1px;top:817.5px;width:9.0px;height:9.0px;background:#f3ecec;border-radius:2px;"></div>
<div style="left:70.4px;top:783.0px;width:9.0px;height:9.0px;background:#f3ecec;border-radius:2px;"></div>
<div style="left:70.4px;top:800.2px;width:9.0px;height:9.0px;background:#f3ecec;border-radius:2px;"></div>
<div style="left:70.4px;top:817.5px;width:9.0px;height:9.0px;background:#f3ecec;border-radius:2px;"></div>
<div style="left:333.6px;top:244.8px;width:688.2px;height:516.0px;background:#ffffff;border:2px solid #8d8d8d;box-shadow:1px 1px 2px rgba(0,0,0,.25);"></div>
<div style="left:347.0px;top:258.0px;width:500.7px;height:488.7px;background:#363636;"></div>
<div style="left:859.0px;top:258.0px;width:148.0px;height:488.7px;background:#b40000;"></div>
<span class="t" style="left:427.6px;top:336.5px;font-size:39.6px;line-height:39.6px;color:#fbfbfb;font-family:'DejaVu Serif','Liberation Serif',serif;letter-spacing:0.20px;-webkit-text-stroke:.55px #fbfbfb;">MLA 8th Edition</span>
<span class="t" style="left:476.2px;top:386.8px;font-size:39.6px;line-height:39.6px;color:#fbfbfb;font-family:'DejaVu Serif','Liberation Serif',serif;letter-spacing:-0.12px;-webkit-text-stroke:.55px #fbfbfb;">Formatting</span>
<span class="t" style="left:551.6px;top:436.8px;font-size:39.6px;line-height:39.6px;color:#fbfbfb;font-family:'DejaVu Serif','Liberation Serif',serif;letter-spacing:-0.19px;-webkit-text-stroke:.55px #fbfbfb;">and</span>
<span class="t" style="left:465.7px;top:486.9px;font-size:39.6px;line-height:39.6px;color:#fbfbfb;font-family:'DejaVu Serif','Liberation Serif',serif;letter-spacing:-0.14px;-webkit-text-stroke:.55px #fbfbfb;">Style Guide:</span>
<span class="t" style="left:427.0px;top:588.3px;font-size:39.6px;line-height:39.6px;color:#fbfbfb;font-style:italic;font-family:'DejaVu Serif','Liberation Serif',serif;letter-spacing:-0.03px;-webkit-text-stroke:.55px #fbfbfb;">Works Cited: The</span>
<span class="t" style="left:532.2px;top:638.2px;font-size:39.6px;line-height:39.6px;color:#fbfbfb;font-style:italic;font-family:'DejaVu Serif','Liberation Serif',serif;letter-spacing:0.53px;-webkit-text-stroke:.55px #fbfbfb;">Basics</span>
<span class="t" style="left:891.5px;top:367.4px;font-size:16.4px;line-height:16.4px;color:#f7e6e0;font-weight:700;font-family:'DejaVu Serif','Liberation Serif',serif;letter-spacing:0.73px;">Adapted</span>
<span class="t" style="left:890.9px;top:388.1px;font-size:16.4px;line-height:16.4px;color:#f7e6e0;font-weight:700;font-family:'DejaVu Serif','Liberation Serif',serif;letter-spacing:0.56px;">from the</span>
<span class="t" style="left:898.0px;top:408.7px;font-size:16.4px;line-height:16.4px;color:#f7e6e0;font-weight:700;font-family:'DejaVu Serif','Liberation Serif',serif;letter-spacing:0.55px;">Purdue</span>
<span class="t" style="left:901.0px;top:428.3px;font-size:16.4px;line-height:16.4px;color:#f7e6e0;font-weight:700;font-family:'DejaVu Serif','Liberation Serif',serif;letter-spacing:0.28px;">Online</span>
<span class="t" style="left:872.4px;top:450.0px;font-size:16.4px;line-height:16.4px;color:#f7e6e0;font-weight:700;font-family:'DejaVu Serif','Liberation Serif',serif;letter-spacing:0.71px;">Writing Lab</span>
<span class="t" style="left:918.2px;top:493.9px;font-size:14.6px;line-height:14.6px;color:#f7e6e0;font-family:'DejaVu Serif','Liberation Serif',serif;letter-spacing:0.81px;-webkit-text-stroke:.3px #f7e6e0;">for</span>
<span class="t" style="left:887.9px;top:537.3px;font-size:14.6px;line-height:14.6px;color:#f7e6e0;font-family:'DejaVu Serif','Liberation Serif',serif;letter-spacing:1.50px;-webkit-text-stroke:.3px #f7e6e0;">Santa Ana</span>
<span class="t" style="left:900.3px;top:555.2px;font-size:14.6px;line-height:14.6px;color:#f7e6e0;font-family:'DejaVu Serif','Liberation Serif',serif;letter-spacing:1.62px;-webkit-text-stroke:.3px #f7e6e0;">College</span>
<svg class="i" style="left:865.0px;top:295.0px;" width="130" height="80" viewBox="0 0 130 80"><path d="M6.400000000000001 6C14 12.5 22 16.5 31 19.5c9 2.8 17 3.4 23 6.5 3.4 1.800000000000001 5.4 4.2 6 7.400000000000001L67.8 72.3 75.6 45.5 79.5 58.6h7L93.2 38.5h-7L82.8 50 79 38.5h-6.400000000000001L69 52 64.2 31c-1-6-4.2-9.6-10.200000000000001-12C46 16 36 16 27 13.5 19 11.4 12 9 6.400000000000001 6z" fill="#2a171b"/>
<path d="M38.5 29.3c-11.2 0-20.200000000000003 6.8-20.200000000000003 15.100000000000001S27.3 59.5 38.5 59.5 58.6 52.7 58.6 44.4 49.7 29.3 38.5 29.3zm.8 2.5c7.6 0 13.8 5.6 13.8 12.600000000000001S46.9 57 39.300000000000004 57 25.2 51.400000000000006 25.2 44.400000000000006 31.700000000000003 31.8 39.3 31.8z" fill="#2a171b" fill-rule="evenodd"/>
<circle cx="38" cy="47.2" r="6" fill="#2a171b"/><ellipse cx="41.4" cy="45.6" rx="1.2" ry="2" transform="rotate(-30 41.4 45.6)" fill="#e8dada"/>
<path d="M95.2 38.5h8.8v14.6h15v5.500000000000001H95.2z" fill="#2a171b"/></svg>
<svg class="i" style="left:905.0px;top:595.8px;" width="62.0" height="99.0" viewBox="0 0 62 99"><rect width="62" height="99" fill="#f1f1f1"/><rect x="0" y="0" width="6" height="6" fill="#e0203a"/><rect x="56" y="0" width="6" height="6" fill="#e0203a"/><rect x="56" y="67" width="6" height="7" fill="#e0203a"/><circle cx="16" cy="19" r="9.2" fill="#e0203a"/><path d="M2.500000000000001 66V37c4-2 7-4 9-7 2-5 8-6 14.500000000000002-6s12 2 14 7l1.000000000000001 3V18c0-6 17-6 17 0v48z" fill="#a9a9a9"/><path d="M41 34v32h17V18c0-6-17-6-17 0z" fill="#b4b4b4"/><path d="M11.5 57V47c0-4 5-4 5 0v10z" fill="#2a2a2a"/><path d="M21.2 57V47c0-4 5-4 5 0v10z" fill="#2a2a2a"/><path d="M31.200000000000003 57V47c0-4 5-4 5 0v10z" fill="#2a2a2a"/><path d="M22.5 37v-5c0-2 2.6-2 2.6 0v5z" fill="#2a2a2a"/><path d="M47 26v-7c0-2 2.600000000000001-2 2.6 0v7z" fill="#2a2a2a"/><rect x="3.0" y="68.5" width="3.2" height="3.2" fill="#1f1f1f"/><rect x="10.6" y="68.5" width="3.2" height="3.2" fill="#1f1f1f"/><rect x="18.2" y="68.5" width="3.2" height="3.2" fill="#1f1f1f"/><rect x="25.8" y="68.5" width="3.2" height="3.2" fill="#1f1f1f"/><rect x="33.4" y="68.5" width="3.2" height="3.2" fill="#1f1f1f"/><path d="M1 77.500000000000001h60M1 90h60" stroke="#333" stroke-width=".8"/><text x="31" y="87" font-family="Liberation Serif,serif" font-size="10.4" text-anchor="middle" fill="#2a2a2a" textLength="58" lengthAdjust="spacingAndGlyphs">SANTA ANA</text><text x="31" y="97" font-family="Liberation Serif,serif" font-size="5.6" text-anchor="middle" fill="#2a2a2a" textLength="56" lengthAdjust="spacing">COLLEGE</text></svg>
<svg class="i" style="left:427.6px;top:372.4px;" width="98" height="4" viewBox="0 0 98 4"><path d="M0 2Q2.0 0.4 4.0 2Q6.0 3.6 8.0 2Q10.0 0.4 12.0 2Q14.0 3.6 16.0 2Q18.0 0.4 20.0 2Q22.0 3.6 24.0 2Q26.0 0.4 28.0 2Q30.0 3.6 32.0 2Q34.0 0.4 36.0 2Q38.0 3.6 40.0 2Q42.0 0.4 44.0 2Q46.0 3.6 48.0 2Q50.0 0.4 52.0 2Q54.0 3.6 56.0 2Q58.0 0.4 60.0 2Q62.0 3.6 64.0 2Q66.0 0.4 68.0 2Q70.0 3.6 72.0 2Q74.0 0.4 76.0 2Q78.0 3.6 80.0 2Q82.0 0.4 84.0 2Q86.0 3.6 88.0 2Q90.0 0.4 92.0 2Q94.0 3.6 96.0 2" fill="none" stroke="#e01010" stroke-width="1.1"/></svg>
<div style="left:1043.0px;top:325.7px;width:6.5px;height:368.3px;background:#8c8c8c;border-radius:3.2px;"></div>
<div style="left:564.5px;top:821.4px;width:240.5px;height:6.0px;background:#8c8c8c;border-radius:3px;"></div>
<div style="left:316.0px;top:473.0px;width:7.4px;height:79.5px;background:#9b9b9b;"></div>
<svg class="i" style="left:317.0px;top:508.5px;" width="6" height="8" viewBox="0 0 6 8"><path d="M5.4.6v6.8L.8 4z" fill="#f4f4f4"/></svg>
<div style="left:1053.0px;top:473.0px;width:8.4px;height:79.5px;background:#a4a4a4;"></div>
<svg class="i" style="left:1055.0px;top:508.5px;" width="6" height="8" viewBox="0 0 6 8"><path d="M.6.6v6.8L5.2 4z" fill="#f4f4f4"/></svg>
<div style="left:316.5px;top:196.0px;width:1.0px;height:636.0px;background:#dedede;"></div>
<span class="t" style="left:106.8px;top:209.2px;font-size:15px;line-height:15px;color:#3d3d3d;font-weight:700;letter-spacing:0.40px;">Slides</span>
<svg class="i" style="left:296.6px;top:209.8px;" width="12.6" height="12.6" viewBox="0 0 12.6 12.6"><circle cx="6.3" cy="6.3" r="6.3" fill="#e2582f"/><path d="M3.9 3.9l4.8 4.8M8.700000000000001 3.9l-4.8 4.8" stroke="#fff" stroke-width="1.7"/></svg>
<div style="left:105.0px;top:235.0px;width:205.5px;height:591.0px;background:#ffffff;border:1px solid #d9d9d9;"></div>
<div style="left:300.8px;top:242.4px;width:5.9px;height:105.0px;background:#8c8c8c;border-radius:3px;"></div>
<div style="left:0;top:0;width:1522px;height:874px;clip-path:polygon(105px 236px,310.5px 236px,310.5px 825.4px,105px 825.4px)">
<div style="left:113.4px;top:243.4px;width:176.6px;height:119.2px;background:#fff;border:2.2px solid #8cb8e8;box-shadow:inset 0 0 0 1px #cfe2f6;"></div>
<span class="t" style="left:129.2px;top:250.2px;font-size:14.6px;line-height:14.6px;color:#7a7a7a;">1</span>
<div style="left:142.4px;top:249.2px;width:141.6px;height:107.4px;background:#fff;border:1px solid #b3b3b3;border-radius:1.5px;box-shadow:1px 1.5px 1.5px rgba(0,0,0,.3);"></div>
<svg class="i" style="left:119.4px;top:320.8px;" width="13" height="14" viewBox="0 0 13 14"><rect x=".8" y=".8" width="5.6" height="5.2" rx="1.4" fill="#d8eeee" stroke="#7f9aa0" stroke-width="1.1"/><path d="M4.6 3.6v9.400000000000001l2.4-2.2h4.2z" fill="#161616"/></svg>
<span class="t" style="left:129.2px;top:377.4px;font-size:14.6px;line-height:14.6px;color:#7a7a7a;">2</span>
<div style="left:142.4px;top:376.4px;width:141.6px;height:107.4px;background:#fff;border:1px solid #b3b3b3;border-radius:1.5px;box-shadow:1px 1.5px 1.5px rgba(0,0,0,.3);"></div>
<svg class="i" style="left:119.4px;top:448.0px;" width="13" height="14" viewBox="0 0 13 14"><rect x=".8" y=".8" width="5.6" height="5.2" rx="1.4" fill="#d8eeee" stroke="#7f9aa0" stroke-width="1.1"/><path d="M4.6 3.6v9.400000000000001l2.4-2.2h4.2z" fill="#161616"/></svg>
<span class="t" style="left:129.2px;top:504.6px;font-size:14.6px;line-height:14.6px;color:#7a7a7a;">3</span>
<div style="left:142.4px;top:503.6px;width:141.6px;height:107.4px;background:#fff;border:1px solid #b3b3b3;border-radius:1.5px;box-shadow:1px 1.5px 1.5px rgba(0,0,0,.3);"></div>
<svg class="i" style="left:119.4px;top:575.2px;" width="13" height="14" viewBox="0 0 13 14"><rect x=".8" y=".8" width="5.6" height="5.2" rx="1.4" fill="#d8eeee" stroke="#7f9aa0" stroke-width="1.1"/><path d="M4.6 3.6v9.400000000000001l2.4-2.2h4.2z" fill="#161616"/></svg>
<span class="t" style="left:129.2px;top:631.8px;font-size:14.6px;line-height:14.6px;color:#7a7a7a;">4</span>
<div style="left:142.4px;top:630.8px;width:141.6px;height:107.4px;background:#fff;border:1px solid #b3b3b3;border-radius:1.5px;box-shadow:1px 1.5px 1.5px rgba(0,0,0,.3);"></div>
<svg class="i" style="left:119.4px;top:702.4px;" width="13" height="14" viewBox="0 0 13 14"><rect x=".8" y=".8" width="5.6" height="5.2" rx="1.4" fill="#d8eeee" stroke="#7f9aa0" stroke-width="1.1"/><path d="M4.6 3.6v9.400000000000001l2.4-2.2h4.2z" fill="#161616"/></svg>
<span class="t" style="left:129.2px;top:759.0px;font-size:14.6px;line-height:14.6px;color:#7a7a7a;">5</span>
<div style="left:142.4px;top:758.0px;width:141.6px;height:107.4px;background:#fff;border:1px solid #b3b3b3;border-radius:1.5px;box-shadow:1px 1.5px 1.5px rgba(0,0,0,.3);"></div>
<div style="left:146.0px;top:252.8px;width:100.7px;height:98.6px;background:#363636;"></div>
<div style="left:249.0px;top:252.8px;width:29.8px;height:98.6px;background:#b40000;"></div>
<span class="t" style="left:162.2px;top:268.7px;font-size:7.97px;line-height:7.97px;color:#e9e9e9;font-weight:700;font-family:'DejaVu Serif','Liberation Serif',serif;letter-spacing:-0.42px;">MLA 8th Edition</span>
<span class="t" style="left:172.0px;top:278.8px;font-size:7.97px;line-height:7.97px;color:#e9e9e9;font-weight:700;font-family:'DejaVu Serif','Liberation Serif',serif;letter-spacing:-0.51px;">Formatting</span>
<span class="t" style="left:187.2px;top:288.9px;font-size:7.97px;line-height:7.97px;color:#e9e9e9;font-weight:700;font-family:'DejaVu Serif','Liberation Serif',serif;letter-spacing:-0.55px;">and</span>
<span class="t" style="left:169.9px;top:299.0px;font-size:7.97px;line-height:7.97px;color:#e9e9e9;font-weight:700;font-family:'DejaVu Serif','Liberation Serif',serif;letter-spacing:-0.42px;">Style Guide:</span>
<span class="t" style="left:162.1px;top:319.5px;font-size:7.97px;line-height:7.97px;color:#e9e9e9;font-weight:700;font-style:italic;font-family:'DejaVu Serif','Liberation Serif',serif;letter-spacing:-0.45px;">Works Cited: The</span>
<span class="t" style="left:183.3px;top:329.5px;font-size:7.97px;line-height:7.97px;color:#e9e9e9;font-weight:700;font-style:italic;font-family:'DejaVu Serif','Liberation Serif',serif;letter-spacing:-0.39px;">Basics</span>
<span class="t" style="left:255.6px;top:274.9px;font-size:3.3px;line-height:3.3px;color:#e99;font-weight:700;font-family:'DejaVu Serif','Liberation Serif',serif;letter-spacing:0.15px;">Adapted</span>
<span class="t" style="left:255.4px;top:279.1px;font-size:3.3px;line-height:3.3px;color:#e99;font-weight:700;font-family:'DejaVu Serif','Liberation Serif',serif;letter-spacing:0.11px;">from the</span>
<span class="t" style="left:256.9px;top:283.2px;font-size:3.3px;line-height:3.3px;color:#e99;font-weight:700;font-family:'DejaVu Serif','Liberation Serif',serif;letter-spacing:0.11px;">Purdue</span>
<span class="t" style="left:257.5px;top:287.2px;font-size:3.3px;line-height:3.3px;color:#e99;font-weight:700;font-family:'DejaVu Serif','Liberation Serif',serif;letter-spacing:0.06px;">Online</span>
<span class="t" style="left:251.7px;top:291.6px;font-size:3.3px;line-height:3.3px;color:#e99;font-weight:700;font-family:'DejaVu Serif','Liberation Serif',serif;letter-spacing:0.14px;">Writing Lab</span>
<span class="t" style="left:260.9px;top:300.4px;font-size:2.94px;line-height:2.94px;color:#e99;font-family:'DejaVu Serif','Liberation Serif',serif;letter-spacing:0.16px;">for</span>
<span class="t" style="left:254.8px;top:309.2px;font-size:2.94px;line-height:2.94px;color:#e99;font-family:'DejaVu Serif','Liberation Serif',serif;letter-spacing:0.30px;">Santa Ana</span>
<span class="t" style="left:257.3px;top:312.8px;font-size:2.94px;line-height:2.94px;color:#e99;font-family:'DejaVu Serif','Liberation Serif',serif;letter-spacing:0.33px;">College</span>
<svg class="i" style="left:250.2px;top:260.3px;" width="26.156" height="16.096" viewBox="0 0 130 80"><path d="M6.400000000000001 6C14 12.5 22 16.5 31 19.5c9 2.8 17 3.4 23 6.5 3.4 1.800000000000001 5.4 4.2 6 7.400000000000001L67.8 72.3 75.6 45.5 79.5 58.6h7L93.2 38.5h-7L82.8 50 79 38.5h-6.400000000000001L69 52 64.2 31c-1-6-4.2-9.6-10.200000000000001-12C46 16 36 16 27 13.5 19 11.4 12 9 6.400000000000001 6z" fill="#5a0c0c"/>
<path d="M38.5 29.3c-11.2 0-20.200000000000003 6.8-20.200000000000003 15.100000000000001S27.3 59.5 38.5 59.5 58.6 52.7 58.6 44.4 49.7 29.3 38.5 29.3zm.8 2.5c7.6 0 13.8 5.6 13.8 12.600000000000001S46.9 57 39.300000000000004 57 25.2 51.400000000000006 25.2 44.400000000000006 31.700000000000003 31.8 39.3 31.8z" fill="#5a0c0c" fill-rule="evenodd"/>
<circle cx="38" cy="47.2" r="6" fill="#5a0c0c"/><ellipse cx="41.4" cy="45.6" rx="1.2" ry="2" transform="rotate(-30 41.4 45.6)" fill="#e8dada"/>
<path d="M95.2 38.5h8.8v14.6h15v5.500000000000001H95.2z" fill="#5a0c0c"/></svg>
<svg class="i" style="left:258.3px;top:321.0px;" width="12.4744" height="19.918799999999997" viewBox="0 0 62 99"><rect width="62" height="99" fill="#f1f1f1"/><rect x="0" y="0" width="6" height="6" fill="#e0203a"/><rect x="56" y="0" width="6" height="6" fill="#e0203a"/><rect x="56" y="67" width="6" height="7" fill="#e0203a"/><circle cx="16" cy="19" r="9.2" fill="#e0203a"/><path d="M2.500000000000001 66V37c4-2 7-4 9-7 2-5 8-6 14.500000000000002-6s12 2 14 7l1.000000000000001 3V18c0-6 17-6 17 0v48z" fill="#a9a9a9"/><path d="M41 34v32h17V18c0-6-17-6-17 0z" fill="#b4b4b4"/></svg>
<div style="left:259.5px;top:324.2px;width:10.1px;height:13.7px;background:#c9b0b0;opacity:.8;"></div>
<div style="left:258.3px;top:321.0px;width:12.5px;height:19.8px;border:1px solid #f3d0d0;border-radius:2px;"></div>
<div style="left:146.0px;top:380.0px;width:133.0px;height:19.6px;background:#343434;"></div>
<div style="left:146.0px;top:403.2px;width:133.0px;height:75.8px;background:linear-gradient(180deg,#ececec,#dedede);"></div>
<span class="t" style="left:154.5px;top:388.2px;font-size:7.1px;line-height:7.1px;color:#f0f0f0;font-weight:700;letter-spacing:-0.17px;">AFTER THIS WORKSHOP I WILL...</span>
<span class="t" style="left:152.9px;top:407.8px;font-size:3.7px;line-height:3.7px;color:#4a4a4a;font-family:'DejaVu Serif','Liberation Serif',serif;letter-spacing:0.34px;">Understand the basic elements required to create an</span>
<div style="left:150.0px;top:408.3px;width:1.8px;height:1.8px;background:#c4102a;"></div>
<span class="t" style="left:152.9px;top:412.1px;font-size:3.7px;line-height:3.7px;color:#4a4a4a;font-family:'DejaVu Serif','Liberation Serif',serif;letter-spacing:0.34px;">MLA-formatted Works Cited page for a research</span>
<span class="t" style="left:152.9px;top:416.3px;font-size:3.7px;line-height:3.7px;color:#4a4a4a;font-family:'DejaVu Serif','Liberation Serif',serif;letter-spacing:0.26px;">assignment</span>
<span class="t" style="left:152.9px;top:421.9px;font-size:3.7px;line-height:3.7px;color:#4a4a4a;font-family:'DejaVu Serif','Liberation Serif',serif;letter-spacing:0.35px;">Understand the relationship to and the importance of a</span>
<div style="left:150.0px;top:422.4px;width:1.8px;height:1.8px;background:#c4102a;"></div>
<span class="t" style="left:152.9px;top:426.2px;font-size:3.7px;line-height:3.7px;color:#4a4a4a;font-family:'DejaVu Serif','Liberation Serif',serif;letter-spacing:0.32px;">Works Cited page to a research assignment</span>
<span class="t" style="left:152.9px;top:431.8px;font-size:3.7px;line-height:3.7px;color:#4a4a4a;font-family:'DejaVu Serif','Liberation Serif',serif;letter-spacing:0.35px;">Know the different sources that must be listed on a</span>
<div style="left:150.0px;top:432.3px;width:1.8px;height:1.8px;background:#c4102a;"></div>
<span class="t" style="left:152.9px;top:436.1px;font-size:3.7px;line-height:3.7px;color:#4a4a4a;font-family:'DejaVu Serif','Liberation Serif',serif;letter-spacing:0.30px;">Works Cited page</span>
<span class="t" style="left:152.9px;top:441.7px;font-size:3.7px;line-height:3.7px;color:#4a4a4a;font-family:'DejaVu Serif','Liberation Serif',serif;letter-spacing:0.35px;">Know how and why sources should be listed on a Works</span>
<div style="left:150.0px;top:442.2px;width:1.8px;height:1.8px;background:#c4102a;"></div>
<span class="t" style="left:152.9px;top:446.2px;font-size:3.7px;line-height:3.7px;color:#4a4a4a;font-family:'DejaVu Serif','Liberation Serif',serif;letter-spacing:0.27px;">Cited page</span>
<span class="t" style="left:152.9px;top:451.5px;font-size:3.7px;line-height:3.7px;color:#4a4a4a;font-family:'DejaVu Serif','Liberation Serif',serif;letter-spacing:0.32px;">Know what information regarding an MLA-formatted</span>
<div style="left:150.0px;top:452.0px;width:1.8px;height:1.8px;background:#c4102a;"></div>
<span class="t" style="left:152.9px;top:456.6px;font-size:3.7px;line-height:3.7px;color:#4a4a4a;font-family:'DejaVu Serif','Liberation Serif',serif;letter-spacing:0.34px;">Works Cited page by using the OWL at Purdue</span>
<span class="t" style="left:152.9px;top:462.2px;font-size:3.7px;line-height:3.7px;color:#4a4a4a;font-family:'DejaVu Serif','Liberation Serif',serif;letter-spacing:0.36px;">Use Microsoft Word to create my own properly</span>
<div style="left:150.0px;top:462.7px;width:1.8px;height:1.8px;background:#c4102a;"></div>
<span class="t" style="left:152.9px;top:466.7px;font-size:3.7px;line-height:3.7px;color:#4a4a4a;font-family:'DejaVu Serif','Liberation Serif',serif;letter-spacing:0.34px;">formatted MLA Works Cited page for a research</span>
<span class="t" style="left:152.9px;top:471.1px;font-size:3.7px;line-height:3.7px;color:#4a4a4a;font-family:'DejaVu Serif','Liberation Serif',serif;letter-spacing:0.26px;">assignment</span>
<div style="left:146.0px;top:507.6px;width:133.0px;height:19.6px;background:#343434;"></div>
<div style="left:146.0px;top:530.0px;width:133.0px;height:75.4px;background:linear-gradient(180deg,#ececec,#dedede);"></div>
<span class="t" style="left:157.7px;top:515.4px;font-size:7.1px;line-height:7.1px;color:#f0f0f0;font-weight:700;letter-spacing:-0.20px;">WHAT IS A WORKS CITED PAGE?</span>
<span class="t" style="left:150.6px;top:534.6px;font-size:3.2px;line-height:3.2px;color:#6a6a6a;font-family:'DejaVu Serif','Liberation Serif',serif;letter-spacing:0.32px;">A Works Cited page provides the necessary information to</span>
<div style="left:147.2px;top:534.9px;width:1.8px;height:1.8px;background:#c4102a;"></div>
<span class="t" style="left:150.6px;top:538.6px;font-size:3.2px;line-height:3.2px;color:#6a6a6a;font-family:'DejaVu Serif','Liberation Serif',serif;letter-spacing:0.20px;">identify and locate the sources that you have referenced,</span>
<span class="t" style="left:150.6px;top:542.3px;font-size:3.2px;line-height:3.2px;color:#6a6a6a;font-family:'DejaVu Serif','Liberation Serif',serif;letter-spacing:0.30px;">paraphrased, or quoted in a research paper.</span>
<span class="t" style="left:150.6px;top:551.9px;font-size:3.2px;line-height:3.2px;color:#6a6a6a;font-family:'DejaVu Serif','Liberation Serif',serif;letter-spacing:0.04px;">A Works Cited page also demonstrates that authors write in light of others</span>
<div style="left:147.2px;top:552.2px;width:1.8px;height:1.8px;background:#333;"></div>
<span class="t" style="left:150.6px;top:555.4px;font-size:3.2px;line-height:3.2px;color:#6a6a6a;font-family:'DejaVu Serif','Liberation Serif',serif;letter-spacing:0.01px;">in the field. Instructors expect students to acknowledge the sources they</span>
<span class="t" style="left:150.6px;top:559.4px;font-size:3.2px;line-height:3.2px;color:#6a6a6a;font-family:'DejaVu Serif','Liberation Serif',serif;letter-spacing:0.07px;">consult.</span>
<span class="t" style="left:150.6px;top:568.2px;font-size:3.2px;line-height:3.2px;color:#6a6a6a;font-family:'DejaVu Serif','Liberation Serif',serif;letter-spacing:0.24px;">Based on what requires documentation, papers that rely on</span>
<div style="left:147.2px;top:568.5px;width:1.8px;height:1.8px;background:#c4102a;"></div>
<span class="t" style="left:150.6px;top:572.2px;font-size:3.2px;line-height:3.2px;color:#6a6a6a;font-family:'DejaVu Serif','Liberation Serif',serif;letter-spacing:0.15px;">published pages need to have a page entitled &quot;Works Cited&quot; to provide</span>
<span class="t" style="left:150.6px;top:575.9px;font-size:3.2px;line-height:3.2px;color:#6a6a6a;font-family:'DejaVu Serif','Liberation Serif',serif;letter-spacing:0.07px;">the list of sources from a student that have been used or cited in the</span>
<span class="t" style="left:150.6px;top:579.9px;font-size:3.2px;line-height:3.2px;color:#6a6a6a;font-family:'DejaVu Serif','Liberation Serif',serif;letter-spacing:0.15px;">essay.</span>
<span class="t" style="left:150.6px;top:589.0px;font-size:3.2px;line-height:3.2px;color:#6a6a6a;font-family:'DejaVu Serif','Liberation Serif',serif;letter-spacing:0.23px;">A complete and accurate Works Cited page also serves as a resource</span>
<div style="left:147.2px;top:589.3px;width:1.8px;height:1.8px;background:#c4102a;"></div>
<span class="t" style="left:150.6px;top:593.0px;font-size:3.2px;line-height:3.2px;color:#6a6a6a;font-family:'DejaVu Serif','Liberation Serif',serif;letter-spacing:0.06px;">for other interested people when reviewing the corresponding paper.</span>
<div style="left:146.0px;top:634.4px;width:133.0px;height:19.6px;background:#343434;"></div>
<div style="left:146.0px;top:657.3px;width:133.0px;height:75.3px;background:linear-gradient(180deg,#ececec,#dedede);"></div>
<span class="t" style="left:152.0px;top:639.0px;font-size:6.4px;line-height:6.4px;color:#eeeeee;font-weight:700;letter-spacing:0.31px;">HOW DO I FORMAT A WORKS CITED</span>
<span class="t" style="left:201.7px;top:646.7px;font-size:6.4px;line-height:6.4px;color:#eeeeee;font-weight:700;letter-spacing:-0.21px;">PAGE?</span>
<span class="t" style="left:155.3px;top:660.9px;font-size:4.3px;line-height:4.3px;color:#707070;font-family:'DejaVu Serif','Liberation Serif',serif;letter-spacing:0.47px;">Start a new page for your Works Cited list</span>
<span class="t" style="left:148.8px;top:660.9px;font-size:4.3px;line-height:4.3px;color:#707070;font-family:'DejaVu Serif','Liberation Serif',serif;letter-spacing:-0.15px;">1.</span>
<span class="t" style="left:155.3px;top:666.5px;font-size:4.3px;line-height:4.3px;color:#707070;font-family:'DejaVu Serif','Liberation Serif',serif;letter-spacing:0.45px;">(e.g., if your paper is 4 pages long, start your</span>
<span class="t" style="left:155.3px;top:671.8px;font-size:4.3px;line-height:4.3px;color:#707070;font-family:'DejaVu Serif','Liberation Serif',serif;letter-spacing:0.43px;">Works Cited list on page 5).</span>
<span class="t" style="left:155.3px;top:678.5px;font-size:4.3px;line-height:4.3px;color:#707070;font-family:'DejaVu Serif','Liberation Serif',serif;letter-spacing:0.46px;">Center the title, Works Cited, at the top of</span>
<span class="t" style="left:148.8px;top:678.5px;font-size:4.3px;line-height:4.3px;color:#707070;font-family:'DejaVu Serif','Liberation Serif',serif;letter-spacing:-0.15px;">2.</span>
<span class="t" style="left:155.3px;top:683.8px;font-size:4.3px;line-height:4.3px;color:#707070;font-family:'DejaVu Serif','Liberation Serif',serif;letter-spacing:0.46px;">the page and do not bold or underline it. Look</span>
<span class="t" style="left:155.3px;top:689.4px;font-size:4.3px;line-height:4.3px;color:#707070;font-family:'DejaVu Serif','Liberation Serif',serif;letter-spacing:0.39px;">for the alignment option in Word.</span>
<span class="t" style="left:155.3px;top:695.8px;font-size:4.3px;line-height:4.3px;color:#707070;font-family:'DejaVu Serif','Liberation Serif',serif;letter-spacing:0.34px;">Double-space the list.</span>
<span class="t" style="left:148.8px;top:695.8px;font-size:4.3px;line-height:4.3px;color:#c4302a;font-family:'DejaVu Serif','Liberation Serif',serif;letter-spacing:-0.15px;">3.</span>
<span class="t" style="left:155.3px;top:702.5px;font-size:4.3px;line-height:4.3px;color:#707070;font-family:'DejaVu Serif','Liberation Serif',serif;letter-spacing:0.45px;">Start the first line of each citation at the left</span>
<span class="t" style="left:148.8px;top:702.5px;font-size:4.3px;line-height:4.3px;color:#707070;font-family:'DejaVu Serif','Liberation Serif',serif;letter-spacing:-0.15px;">4.</span>
<span class="t" style="left:155.3px;top:707.8px;font-size:4.3px;line-height:4.3px;color:#707070;font-family:'DejaVu Serif','Liberation Serif',serif;letter-spacing:0.44px;">margin; each subsequent line should be</span>
<span class="t" style="left:155.3px;top:713.4px;font-size:4.3px;line-height:4.3px;color:#707070;font-family:'DejaVu Serif','Liberation Serif',serif;letter-spacing:0.44px;">indented (also known as a &quot;hanging indent&quot;).</span>
<div style="left:146.0px;top:761.6px;width:133.0px;height:19.8px;background:#343434;"></div>
<div style="left:146.0px;top:781.4px;width:133.0px;height:84.6px;background:#fdfdfd;"></div>
<div style="left:147.2px;top:783.0px;width:1.0px;height:83.0px;background:#c8c8c8;"></div>
<span class="t" style="left:152.0px;top:765.2px;font-size:3.6px;line-height:3.6px;color:#e8e8e8;font-weight:700;letter-spacing:-0.27px;">Works Cited</span>
<span class="t" style="left:152.0px;top:769.1px;font-size:3.6px;line-height:3.6px;color:#e8e8e8;font-weight:700;letter-spacing:-0.54px;">Sample Works Cited</span>
<span class="t" style="left:152.0px;top:773.1px;font-size:3.6px;line-height:3.6px;color:#e8e8e8;font-weight:700;letter-spacing:-0.62px;">Header &amp; page number</span>
<span class="t" style="left:152.0px;top:777.0px;font-size:3.6px;line-height:3.6px;color:#e8e8e8;font-weight:700;letter-spacing:-0.07px;">Pages numbered</span>
<span class="t" style="left:202.0px;top:799.1px;font-size:3.0px;line-height:3.0px;color:#d46a6a;font-family:'DejaVu Serif','Liberation Serif',serif;letter-spacing:0.13px;">Works Cited</span>
<svg class="i" style="left:204.0px;top:800.0px;" width="19" height="6.4" viewBox="0 0 19 6.4"><ellipse cx="9.5" cy="3.2" rx="9" ry="2.7" fill="none" stroke="#d98a8a" stroke-width=".5"/></svg>
<svg class="i" style="left:248.6px;top:791.4px;" width="19" height="6.6" viewBox="0 0 19 6.6"><ellipse cx="9.5" cy="3.3" rx="9" ry="2.8" fill="none" stroke="#d98a8a" stroke-width=".5"/></svg>
<span class="t" style="left:251.0px;top:787.2px;font-size:2.6px;line-height:2.6px;color:#d98a8a;font-family:'DejaVu Serif','Liberation Serif',serif;letter-spacing:-0.45px;">Last Name 12</span>
<div style="left:263.4px;top:798.0px;width:0.5px;height:28.0px;background:#e3a0a0;"></div>
<div style="left:270.6px;top:802.0px;width:0.5px;height:24.0px;background:#e8b4b4;"></div>
<span class="t" style="left:160.0px;top:806.3px;font-size:2.5px;line-height:2.5px;color:#7a7a7a;font-family:'DejaVu Serif','Liberation Serif',serif;letter-spacing:-0.26px;">Dean, Cornelia. &quot;Executive on a Mission: Saving the Planet.&quot; The New York Times, 22 May 2007,</span>
<span class="t" style="left:158.0px;top:812.0px;font-size:2.5px;line-height:2.5px;color:#7a7a7a;font-family:'DejaVu Serif','Liberation Serif',serif;letter-spacing:-0.12px;">www.nytimes.com/2007/05/22/science/earth/22ander.html. Accessed 29 May 2019.</span>
<span class="t" style="left:160.0px;top:817.7px;font-size:2.5px;line-height:2.5px;color:#7a7a7a;font-family:'DejaVu Serif','Liberation Serif',serif;letter-spacing:-0.27px;">Ebert, Roger. Review of An Inconvenient Truth, directed by Davis Guggenheim. rogerebert.com, 1</span>
<span class="t" style="left:164.0px;top:823.4px;font-size:2.5px;line-height:2.5px;color:#7a7a7a;font-family:'DejaVu Serif','Liberation Serif',serif;letter-spacing:-0.28px;">June 2006, www.rogerebert.com/reviews/an-inconvenient-truth-2006. Accessed 15 June 2019.</span>
</div>
<div style="left:1053.0px;top:196.0px;width:1.0px;height:636.0px;background:#d9d9d9;"></div>
<svg class="i" style="left:1064.0px;top:203.0px;" width="9" height="14" viewBox="0 0 9 14"><rect x="0.6" y="0.8" width="2.2" height="2.2" fill="#6a6a6a"/><rect x="0.6" y="5.6" width="2.2" height="2.2" fill="#6a6a6a"/><rect x="0.6" y="10.4" width="2.2" height="2.2" fill="#6a6a6a"/><rect x="5.4" y="0.8" width="2.2" height="2.2" fill="#6a6a6a"/><rect x="5.4" y="5.6" width="2.2" height="2.2" fill="#6a6a6a"/><rect x="5.4" y="10.4" width="2.2" height="2.2" fill="#6a6a6a"/></svg>
<span class="t" style="left:1081.0px;top:203.5px;font-size:15px;line-height:15px;color:#3d3d3d;font-weight:700;letter-spacing:0.68px;">Properties</span>
<svg class="i" style="left:1429.4px;top:206.0px;" width="10" height="10" viewBox="0 0 10 10"><path d="M1 1l8 8M9 1L1 9" stroke="#555" stroke-width="1.3"/></svg>
<svg class="i" style="left:1464.6px;top:211.0px;" width="11.6" height="12" viewBox="0 0 11.6 12"><path d="M0 1.500000000000001h11.6M0 6h11.6M0 10.5h11.6" stroke="#6a6a6a" stroke-width="1.1"/></svg>
<div style="left:1063.0px;top:225.0px;width:383.0px;height:18.0px;background:#ebebeb;"></div>
<svg class="i" style="left:1067.0px;top:231.4px;" width="9.6" height="5.6" viewBox="0 0 9.6 5.6"><path d="M.6.6l4.2 4 4.200000000000001-4" fill="none" stroke="#666" stroke-width="1.2"/></svg>
<span class="t" style="left:1081.0px;top:226.6px;font-size:15px;line-height:15px;color:#3d3d3d;font-weight:700;letter-spacing:0.37px;">Slide</span>
<svg class="i" style="left:1430.6px;top:228.6px;" width="12.4" height="12.4" viewBox="0 0 12.4 12.4"><circle cx="6.2" cy="6.2" r="4.1" fill="none" stroke="#a8a8a8" stroke-width="2.2" stroke-dasharray="1.7 1.52"/><circle cx="6.2" cy="6.2" r="3.4" fill="#ebebeb" stroke="#a8a8a8" stroke-width="1"/><circle cx="6.2" cy="6.2" r="1.4" fill="none" stroke="#a8a8a8" stroke-width=".9"/></svg>
<div style="left:1216.0px;top:250.8px;width:173.0px;height:36.5px;background:#ffffff;border:1px solid #d4d4d4;border-radius:5.5px;"></div>
<span class="t" style="left:1151.0px;top:261.8px;font-size:14.8px;line-height:14.8px;color:#5a5a5a;letter-spacing:1.03px;">Format:</span>
<span class="t" style="left:1230.0px;top:261.8px;font-size:14.8px;line-height:14.8px;color:#686868;letter-spacing:0.15px;">On-scre...</span>
<span class="t" style="left:1308.6px;top:261.8px;font-size:14.8px;line-height:14.8px;color:#686868;letter-spacing:0.25px;">w (4:3)</span>
<svg class="i" style="left:1364.6px;top:267.0px;" width="9.6" height="5.6" viewBox="0 0 9.6 5.6"><path d="M.6.6l4.2 4 4.200000000000001-4" fill="none" stroke="#6a6a6a" stroke-width="1.2"/></svg>
<div style="left:1216.0px;top:292.0px;width:173.0px;height:35.4px;background:#ffffff;border:1px solid #d4d4d4;border-radius:5.5px;"></div>
<span class="t" style="left:1120.3px;top:302.5px;font-size:14.8px;line-height:14.8px;color:#5a5a5a;letter-spacing:1.03px;">Orientation:</span>
<span class="t" style="left:1230.0px;top:302.5px;font-size:14.8px;line-height:14.8px;color:#686868;letter-spacing:0.60px;">Landscape</span>
<svg class="i" style="left:1364.6px;top:307.5px;" width="9.6" height="5.6" viewBox="0 0 9.6 5.6"><path d="M.6.6l4.2 4 4.200000000000001-4" fill="none" stroke="#6a6a6a" stroke-width="1.2"/></svg>
<div style="left:1216.0px;top:332.7px;width:173.0px;height:35.8px;background:#ffffff;border:1px solid #d4d4d4;border-radius:5.5px;"></div>
<span class="t" style="left:1118.8px;top:342.7px;font-size:14.8px;line-height:14.8px;color:#5a5a5a;letter-spacing:0.66px;">Background:</span>
<span class="t" style="left:1230.0px;top:342.7px;font-size:14.8px;line-height:14.8px;color:#686868;letter-spacing:0.78px;">None</span>
<svg class="i" style="left:1364.6px;top:348.4px;" width="9.6" height="5.6" viewBox="0 0 9.6 5.6"><path d="M.6.6l4.2 4 4.200000000000001-4" fill="none" stroke="#6a6a6a" stroke-width="1.2"/></svg>
<div style="left:1216.0px;top:372.8px;width:173.0px;height:35.9px;background:#ffffff;border:1px solid #d4d4d4;border-radius:5.5px;"></div>
<span class="t" style="left:1250.6px;top:383.5px;font-size:14.8px;line-height:14.8px;color:#686868;letter-spacing:0.55px;">Insert Image...</span>
<div style="left:1216.0px;top:413.0px;width:173.0px;height:36.4px;background:#ffffff;border:1px solid #d4d4d4;border-radius:5.5px;"></div>
<span class="t" style="left:1113.5px;top:423.9px;font-size:14.8px;line-height:14.8px;color:#5a5a5a;letter-spacing:0.72px;">Master Slide:</span>
<span class="t" style="left:1230.0px;top:423.9px;font-size:14.8px;line-height:14.8px;color:#686868;letter-spacing:0.65px;">Title Slide</span>
<svg class="i" style="left:1364.6px;top:429.0px;" width="9.6" height="5.6" viewBox="0 0 9.6 5.6"><path d="M.6.6l4.2 4 4.200000000000001-4" fill="none" stroke="#6a6a6a" stroke-width="1.2"/></svg>
<svg class="i" style="left:1220.7px;top:456.6px;" width="17.4" height="17.4" viewBox="0 0 17.4 17.4"><rect width="17.4" height="17.4" rx="3.4" fill="#e95420"/><path d="M3.8 8.8l3.6 3.6 6.4-7" fill="none" stroke="#fff" stroke-width="2.1"/></svg>
<span class="t" style="left:1243.0px;top:457.9px;font-size:14.8px;line-height:14.8px;color:#5a5a5a;letter-spacing:0.73px;">Master Background</span>
<svg class="i" style="left:1220.7px;top:484.0px;" width="17.4" height="17.4" viewBox="0 0 17.4 17.4"><rect width="17.4" height="17.4" rx="3.4" fill="#e95420"/><path d="M3.8 8.8l3.6 3.6 6.4-7" fill="none" stroke="#fff" stroke-width="2.1"/></svg>
<span class="t" style="left:1243.0px;top:485.1px;font-size:14.8px;line-height:14.8px;color:#5a5a5a;letter-spacing:0.85px;">Master Objects</span>
<div style="left:1216.0px;top:508.7px;width:173.0px;height:35.8px;background:#ffffff;border:1px solid #d4d4d4;border-radius:5.5px;"></div>
<span class="t" style="left:1257.0px;top:518.8px;font-size:14.8px;line-height:14.8px;color:#686868;letter-spacing:0.97px;">Master View</span>
<div style="left:1063.0px;top:553.5px;width:383.0px;height:18.5px;background:#ebebeb;"></div>
<svg class="i" style="left:1067.0px;top:560.0px;" width="9.6" height="5.6" viewBox="0 0 9.6 5.6"><path d="M.6.6l4.2 4 4.200000000000001-4" fill="none" stroke="#666" stroke-width="1.2"/></svg>
<span class="t" style="left:1081.0px;top:555.0px;font-size:15px;line-height:15px;color:#3d3d3d;font-weight:700;letter-spacing:0.40px;">Layouts</span>
<div style="left:1159.0px;top:573.0px;width:95.0px;height:71.3px;border:1px solid #e2705c;"></div>
<svg class="i" style="left:1075.9px;top:580.3px;filter:drop-shadow(0 1px 0.6px rgba(0,0,0,.18));" width="70" height="56" viewBox="0 0 70 56"><rect x=".75" y=".75" width="68.5" height="54.5" rx="9" fill="#ebebeb" stroke="#b7b7b7" stroke-width="1.5"/></svg>
<svg class="i" style="left:1171.1px;top:580.3px;filter:drop-shadow(0 1px 0.6px rgba(0,0,0,.18));" width="70" height="56" viewBox="0 0 70 56"><rect x=".75" y=".75" width="68.5" height="54.5" rx="9" fill="#ebebeb" stroke="#b7b7b7" stroke-width="1.5"/><rect x="7" y="7.4" width="56" height="8.2" rx="3" fill="#9460e0"/><rect x="7" y="22" width="56" height="26.6" rx="2.5" fill="#8a8a8a"/><rect x="11.6" y="27" width="46.8" height="5" rx="2" fill="#9460e0"/></svg>
<svg class="i" style="left:1266.2px;top:580.3px;filter:drop-shadow(0 1px 0.6px rgba(0,0,0,.18));" width="70" height="56" viewBox="0 0 70 56"><rect x=".75" y=".75" width="68.5" height="54.5" rx="9" fill="#ebebeb" stroke="#b7b7b7" stroke-width="1.5"/><rect x="7" y="7.4" width="56" height="8.2" rx="3" fill="#9460e0"/><rect x="7" y="22" width="56" height="26.6" rx="2.5" fill="#8a8a8a"/></svg>
<svg class="i" style="left:1361.4px;top:580.3px;filter:drop-shadow(0 1px 0.6px rgba(0,0,0,.18));" width="70" height="56" viewBox="0 0 70 56"><rect x=".75" y=".75" width="68.5" height="54.5" rx="9" fill="#ebebeb" stroke="#b7b7b7" stroke-width="1.5"/><rect x="7" y="7.4" width="56" height="8.2" rx="3" fill="#9460e0"/><rect x="7" y="22" width="26" height="26.6" rx="2.5" fill="#8a8a8a"/><rect x="37" y="22" width="26" height="26.6" rx="2.5" fill="#8a8a8a"/></svg>
<svg class="i" style="left:1075.9px;top:652.5px;filter:drop-shadow(0 1px 0.6px rgba(0,0,0,.18));" width="70" height="56" viewBox="0 0 70 56"><rect x=".75" y=".75" width="68.5" height="54.5" rx="9" fill="#ebebeb" stroke="#b7b7b7" stroke-width="1.5"/><rect x="7" y="7.4" width="56" height="8.2" rx="3" fill="#9460e0"/></svg>
<svg class="i" style="left:1171.1px;top:652.5px;filter:drop-shadow(0 1px 0.6px rgba(0,0,0,.18));" width="70" height="56" viewBox="0 0 70 56"><rect x=".75" y=".75" width="68.5" height="54.5" rx="9" fill="#ebebeb" stroke="#b7b7b7" stroke-width="1.5"/><rect x="7" y="7.4" width="56" height="41.2" rx="2.5" fill="#8a8a8a"/><rect x="11.4" y="21" width="47.2" height="5.4" rx="2" fill="#9460e0"/><rect x="15.4" y="30.4" width="39.2" height="5" rx="2" fill="#9460e0"/></svg>
<svg class="i" style="left:1266.2px;top:652.5px;filter:drop-shadow(0 1px 0.6px rgba(0,0,0,.18));" width="70" height="56" viewBox="0 0 70 56"><rect x=".75" y=".75" width="68.5" height="54.5" rx="9" fill="#ebebeb" stroke="#b7b7b7" stroke-width="1.5"/><rect x="7" y="7.4" width="56" height="8.2" rx="3" fill="#9460e0"/><rect x="7" y="22" width="26" height="10.6" rx="2.5" fill="#8a8a8a"/><rect x="7" y="37.4" width="26" height="11" rx="2.5" fill="#8a8a8a"/><rect x="37" y="22" width="26" height="26.6" rx="2.5" fill="#8a8a8a"/></svg>
<svg class="i" style="left:1361.4px;top:652.5px;filter:drop-shadow(0 1px 0.6px rgba(0,0,0,.18));" width="70" height="56" viewBox="0 0 70 56"><rect x=".75" y=".75" width="68.5" height="54.5" rx="9" fill="#ebebeb" stroke="#b7b7b7" stroke-width="1.5"/><rect x="7" y="7.4" width="56" height="8.2" rx="3" fill="#9460e0"/><rect x="7" y="22" width="26" height="26.6" rx="2.5" fill="#8a8a8a"/><rect x="37" y="22" width="26" height="10.6" rx="2.5" fill="#8a8a8a"/><rect x="37" y="37.4" width="26" height="11" rx="2.5" fill="#8a8a8a"/></svg>
<svg class="i" style="left:1075.9px;top:724.8px;filter:drop-shadow(0 1px 0.6px rgba(0,0,0,.18));" width="70" height="56" viewBox="0 0 70 56"><rect x=".75" y=".75" width="68.5" height="54.5" rx="9" fill="#ebebeb" stroke="#b7b7b7" stroke-width="1.5"/><rect x="7" y="7.4" width="56" height="8.2" rx="3" fill="#9460e0"/><rect x="7" y="22" width="56" height="10.6" rx="2.5" fill="#8a8a8a"/><rect x="7" y="37.4" width="26" height="11" rx="2.5" fill="#8a8a8a"/><rect x="37" y="37.4" width="26" height="11" rx="2.5" fill="#8a8a8a"/></svg>
<svg class="i" style="left:1171.1px;top:724.8px;filter:drop-shadow(0 1px 0.6px rgba(0,0,0,.18));" width="70" height="56" viewBox="0 0 70 56"><rect x=".75" y=".75" width="68.5" height="54.5" rx="9" fill="#ebebeb" stroke="#b7b7b7" stroke-width="1.5"/><rect x="7" y="7.4" width="56" height="8.2" rx="3" fill="#9460e0"/><rect x="7" y="22" width="56" height="10.6" rx="2.5" fill="#8a8a8a"/><rect x="7" y="37.4" width="56" height="11" rx="2.5" fill="#8a8a8a"/></svg>
<svg class="i" style="left:1266.2px;top:724.8px;filter:drop-shadow(0 1px 0.6px rgba(0,0,0,.18));" width="70" height="56" viewBox="0 0 70 56"><rect x=".75" y=".75" width="68.5" height="54.5" rx="9" fill="#ebebeb" stroke="#b7b7b7" stroke-width="1.5"/><rect x="7" y="7.4" width="56" height="8.2" rx="3" fill="#9460e0"/><rect x="7" y="22" width="26" height="10.6" rx="2.5" fill="#8a8a8a"/><rect x="37" y="22" width="26" height="10.6" rx="2.5" fill="#8a8a8a"/><rect x="7" y="37.4" width="26" height="11" rx="2.5" fill="#8a8a8a"/><rect x="37" y="37.4" width="26" height="11" rx="2.5" fill="#8a8a8a"/></svg>
<svg class="i" style="left:1361.4px;top:724.8px;filter:drop-shadow(0 1px 0.6px rgba(0,0,0,.18));" width="70" height="56" viewBox="0 0 70 56"><rect x=".75" y=".75" width="68.5" height="54.5" rx="9" fill="#ebebeb" stroke="#b7b7b7" stroke-width="1.5"/><rect x="7" y="7.4" width="56" height="8.2" rx="3" fill="#9460e0"/><rect x="7.0" y="22" width="15" height="10.6" rx="2.5" fill="#8a8a8a"/><rect x="7.0" y="37.4" width="15" height="11" rx="2.5" fill="#8a8a8a"/><rect x="27.6" y="22" width="15" height="10.6" rx="2.5" fill="#8a8a8a"/><rect x="27.6" y="37.4" width="15" height="11" rx="2.5" fill="#8a8a8a"/><rect x="48.2" y="22" width="15" height="10.6" rx="2.5" fill="#8a8a8a"/><rect x="48.2" y="37.4" width="15" height="11" rx="2.5" fill="#8a8a8a"/></svg>
<div style="left:1450.7px;top:247.0px;width:39.3px;height:37.0px;background:#dedede;border-radius:6px;"></div>
<svg class="i" style="left:1460.7px;top:256.1px;" width="18.6" height="19" viewBox="0 0 18.6 19"><rect x=".4" y=".6" width="17.8" height="7.6" rx="3.8" fill="#e95420"/><circle cx="13.8" cy="4.4" r="2.5" fill="#fff"/><rect x=".4" y="10.8" width="17.8" height="7.6" rx="3.8" fill="#e95420"/><circle cx="4.8" cy="14.6" r="2.5" fill="#fff"/></svg>
<svg class="i" style="left:1457.0px;top:301.0px;" width="24" height="22" viewBox="0 0 24 22"><path d="M12.6 12L16.4 2h2.2L22.4 12h-2l-.9-2.6h-4l-.9 2.6zM16 7.800000000000001h3L17.5 3.8z" fill="#2c2c2c"/><path d="M6 11.2l5.600000000000001-3.6 4 5.4L10 16.6z" fill="#f4f4f4" stroke="#6a6a6a" stroke-width="1.2"/><path d="M7.6 14.6L1.4 20.8" stroke="#e8655a" stroke-width="1.6" stroke-linecap="round"/><path d="M5.6 11.6l4.800000000000001 5.6" stroke="#6a6a6a" stroke-width="1.4"/></svg>
<svg class="i" style="left:1459.0px;top:348.4px;" width="23" height="20" viewBox="0 0 23 20"><rect x=".6" y=".6" width="17" height="13.6" rx="2.2" fill="#c64bbc" stroke="#a23a9a" stroke-width="1"/><rect x="4.6" y="5" width="17.8" height="14.4" rx="2.2" fill="#dc5fd0" stroke="#b548aa" stroke-width="1"/><path d="M7 16.4l4-5 2.6 3 1.8-1.6 3.6 3.6z" fill="#fff"/><circle cx="17.8" cy="9" r="1.3" fill="#fff"/></svg>
<svg class="i" style="left:1459.0px;top:392.8px;" width="22" height="22" viewBox="0 0 22 22"><circle cx="11" cy="11" r="10.2" fill="#3f6fdc" stroke="#2c55b8" stroke-width="1"/><path d="M15.8 5.6l-2.6 7.200000000000001-7 3 2.6-7.200000000000001z" fill="#fff"/><path d="M15.8 5.6l-2.6 7.2-4.400000000000001-4.4z" fill="#f2a0a0"/></svg>
<svg class="i" style="left:1460.0px;top:440.0px;" width="20" height="20" viewBox="0 0 20 20"><path d="M10 1l9 9-9 9-9-9z" fill="#fdfdfd" stroke="#767676" stroke-width="1.4"/></svg>
<svg class="i" style="left:1457.5px;top:486.1px;" width="27" height="23" viewBox="0 0 27 23"><path d="M.6 1.400000000000001h25" stroke="#6c6c6c" stroke-width="1.6"/><path d="M2.200000000000001 2v14.4a1.8 1.8 0 0 0 1.8 1.8h18.2a1.8 1.8 0 0 0 1.8-1.8V2" fill="#fdfdfd" stroke="#7a7a7a" stroke-width="1.2"/><path d="M5 6.6h5" stroke="#e05a4a" stroke-width="1.6"/><path d="M5 10h5" stroke="#5b7fd6" stroke-width="1.6"/><path d="M5 13.4h5" stroke="#3aa655" stroke-width="1.6"/><circle cx="15.8" cy="10.2" r="4.2" fill="#3aa655"/><path d="M15.8 10.2V6a4.2 4.2 0 0 1 4.2 4.2z" fill="#d9534a"/><path d="M18.6 14.4l5.6 3.6-5.6 3.6zM24.6 14v8" fill="#ee5a36" stroke="#ee5a36" stroke-width="1.2"/></svg>
<svg class="i" style="left:1460.0px;top:531.1px;" width="20.8" height="21" viewBox="0 0 20.8 21"><rect x=".3" y=".3" width="20.2" height="20.4" fill="#5b5b5b"/><rect x="3.8" y=".3" width="13.2" height="20.4" fill="#c455c4"/><path d="M3.8 10.5h13.2" stroke="#8c3e8a" stroke-width="1"/><rect x="1.2" y="1.4" width="1.7" height="1.7" fill="#fff"/><rect x="17.9" y="1.4" width="1.7" height="1.7" fill="#fff"/><rect x="1.2" y="4.7" width="1.7" height="1.7" fill="#fff"/><rect x="17.9" y="4.7" width="1.7" height="1.7" fill="#fff"/><rect x="1.2" y="8.0" width="1.7" height="1.7" fill="#fff"/><rect x="17.9" y="8.0" width="1.7" height="1.7" fill="#fff"/><rect x="1.2" y="11.3" width="1.7" height="1.7" fill="#fff"/><rect x="17.9" y="11.3" width="1.7" height="1.7" fill="#fff"/><rect x="1.2" y="14.6" width="1.7" height="1.7" fill="#fff"/><rect x="17.9" y="14.6" width="1.7" height="1.7" fill="#fff"/><rect x="1.2" y="17.9" width="1.7" height="1.7" fill="#fff"/><rect x="17.9" y="17.9" width="1.7" height="1.7" fill="#fff"/></svg>
<svg class="i" style="left:1458.5px;top:578.9px;" width="25" height="21" viewBox="0 0 25 21"><path d="M1 3.2A2 2 0 0 1 3 1.2h18.6L19 14.2a2 2 0 0 1-2 1.6H3a2 2 0 0 1-2-2z" fill="#84c7f2" stroke="#5a94b8" stroke-width="1.1"/><path d="M17.2 13.8L21.4 2.6l2.8 1.2-4.6 11z" fill="#2f6bd8"/><path d="M17.2 13.8l-1.2 3.8 3.6-2.8z" fill="#f0b27a"/><path d="M16 17.6l-.8 2.2" stroke="#e4572e" stroke-width="1"/></svg>
<div style="left:103.0px;top:831.0px;width:1397.0px;height:20.0px;background:#fafafa;"></div>
<div style="left:103.0px;top:831.0px;width:1397.0px;height:1.0px;background:#d2d2d2;"></div>
<span class="t" style="left:113.6px;top:837.2px;font-size:13px;line-height:13px;color:#666666;letter-spacing:0.13px;">Slide 1 of 24</span>
<span class="t" style="left:555.3px;top:837.2px;font-size:13px;line-height:13px;color:#666666;letter-spacing:0.05px;">Title Slide</span>
<span class="t" style="left:786.6px;top:837.5px;font-size:12.6px;line-height:12.6px;color:#666666;letter-spacing:0.47px;">-3.05 / 13.07</span>
<span class="t" style="left:903.0px;top:837.5px;font-size:12.6px;line-height:12.6px;color:#666666;letter-spacing:0.18px;">0.00 x 0.00</span>
<span class="t" style="left:1123.5px;top:837.2px;font-size:13px;line-height:13px;color:#666666;letter-spacing:-0.32px;">English (USA)</span>
<span class="t" style="left:1463.9px;top:837.2px;font-size:13px;line-height:13px;color:#666666;letter-spacing:-0.14px;">65%</span>
<div style="left:193.5px;top:834.0px;width:1.0px;height:17.0px;background:#dddddd;"></div>
<div style="left:546.3px;top:834.0px;width:1.0px;height:17.0px;background:#dddddd;"></div>
<div style="left:753.2px;top:834.0px;width:1.0px;height:17.0px;background:#dddddd;"></div>
<div style="left:991.1px;top:834.0px;width:1.0px;height:17.0px;background:#dddddd;"></div>
<div style="left:1014.5px;top:834.0px;width:1.0px;height:17.0px;background:#dddddd;"></div>
<div style="left:1045.5px;top:834.0px;width:1.0px;height:17.0px;background:#dddddd;"></div>
<div style="left:1273.5px;top:834.0px;width:1.0px;height:17.0px;background:#dddddd;"></div>
<div style="left:1455.0px;top:834.0px;width:1.0px;height:17.0px;background:#dddddd;"></div>
<svg class="i" style="left:766.0px;top:838.0px;" width="15" height="10" viewBox="0 0 15 10"><rect x="3.6" y="2.6" width="10.6" height="6" rx="1" fill="#fdfdfd" stroke="#7a7a7a" stroke-width="1"/><path d="M.4 2.6h5M2.8.4v4.6" stroke="#d9534a" stroke-width=".9"/></svg>
<svg class="i" style="left:879.6px;top:838.0px;" width="16" height="10" viewBox="0 0 16 10"><rect x="3.6" y="2" width="11.6" height="7" rx="1" fill="#fdfdfd" stroke="#7a7a7a" stroke-width="1"/><path d="M3.6.8h11.6M1 2v7" stroke="#e57373" stroke-width="1"/></svg>
<svg class="i" style="left:998.6px;top:837.0px;" width="10" height="12" viewBox="0 0 10 12"><path d="M3.2.6h3.6v4h2.4L5 9.2.8 4.6h2.4z" fill="#92c83e" stroke="#6f9f2a" stroke-width=".7"/><path d="M1 11h8" stroke="#777" stroke-width="1"/></svg>
<svg class="i" style="left:1279.4px;top:834.4px;" width="17" height="17" viewBox="0 0 17 17"><path d="M8.5 1.2v14.6M1.2 8.5h14.6" stroke="#d9534a" stroke-width="1"/><path d="M8.5.4l2 2.6h-4zM8.5 16.6l2-2.6h-4zM.4 8.5l2.6-2v4zM16.6 8.5l-2.6-2v4z" fill="#d9534a"/></svg>
<div style="left:1311.6px;top:842.6px;width:8.0px;height:1.6px;background:#555;"></div>
<div style="left:1326.0px;top:843.0px;width:105.0px;height:1.0px;background:#8a8a8a;"></div>
<div style="left:1376.6px;top:840.4px;width:1.0px;height:6.2px;background:#8a8a8a;"></div>
<svg class="i" style="left:1354.0px;top:839.0px;" width="9.2" height="9.2" viewBox="0 0 9.2 9.2"><circle cx="4.6" cy="4.6" r="3.9" fill="#fcfcfc" stroke="#6a6a6a" stroke-width="1.1"/></svg>
<svg class="i" style="left:1438.0px;top:839.0px;" width="9.4" height="9.4" viewBox="0 0 9.4 9.4"><path d="M4.7.4v8.6M.4 4.7h8.6" stroke="#555" stroke-width="1.6"/></svg>
<div style="left:1388.0px;top:35.0px;width:80.0px;height:80.0px;background:rgba(0,0,0,0.76);"></div>
<svg class="i" style="left:1408.0px;top:55.0px;" width="40" height="40" viewBox="0 0 40 40"><path d="M18 4H6.5A2.5 2.5 0 0 0 4 6.5v27A2.500000000000001 2.5 0 0 0 6.5 36h27a2.5 2.5 0 0 0 2.5-2.5V22" fill="none" stroke="#c9cbc8" stroke-width="3.6"/><path d="M23 4h13v13M36 4L13 27" fill="none" stroke="#c9cbc8" stroke-width="3.6"/></svg>
<svg class="i" style="left:254.6px;top:615.6px;" width="13" height="20" viewBox="0 0 13 20"><path d="M.8.8v15.2l3.6-3.400000000000001 2.8 6.4 2.6-1.1-2.800000000000001-6.2h5z" fill="#141414" stroke="#f2f2f2" stroke-width=".7"/></svg>
</div></div>
</body>
</html>
